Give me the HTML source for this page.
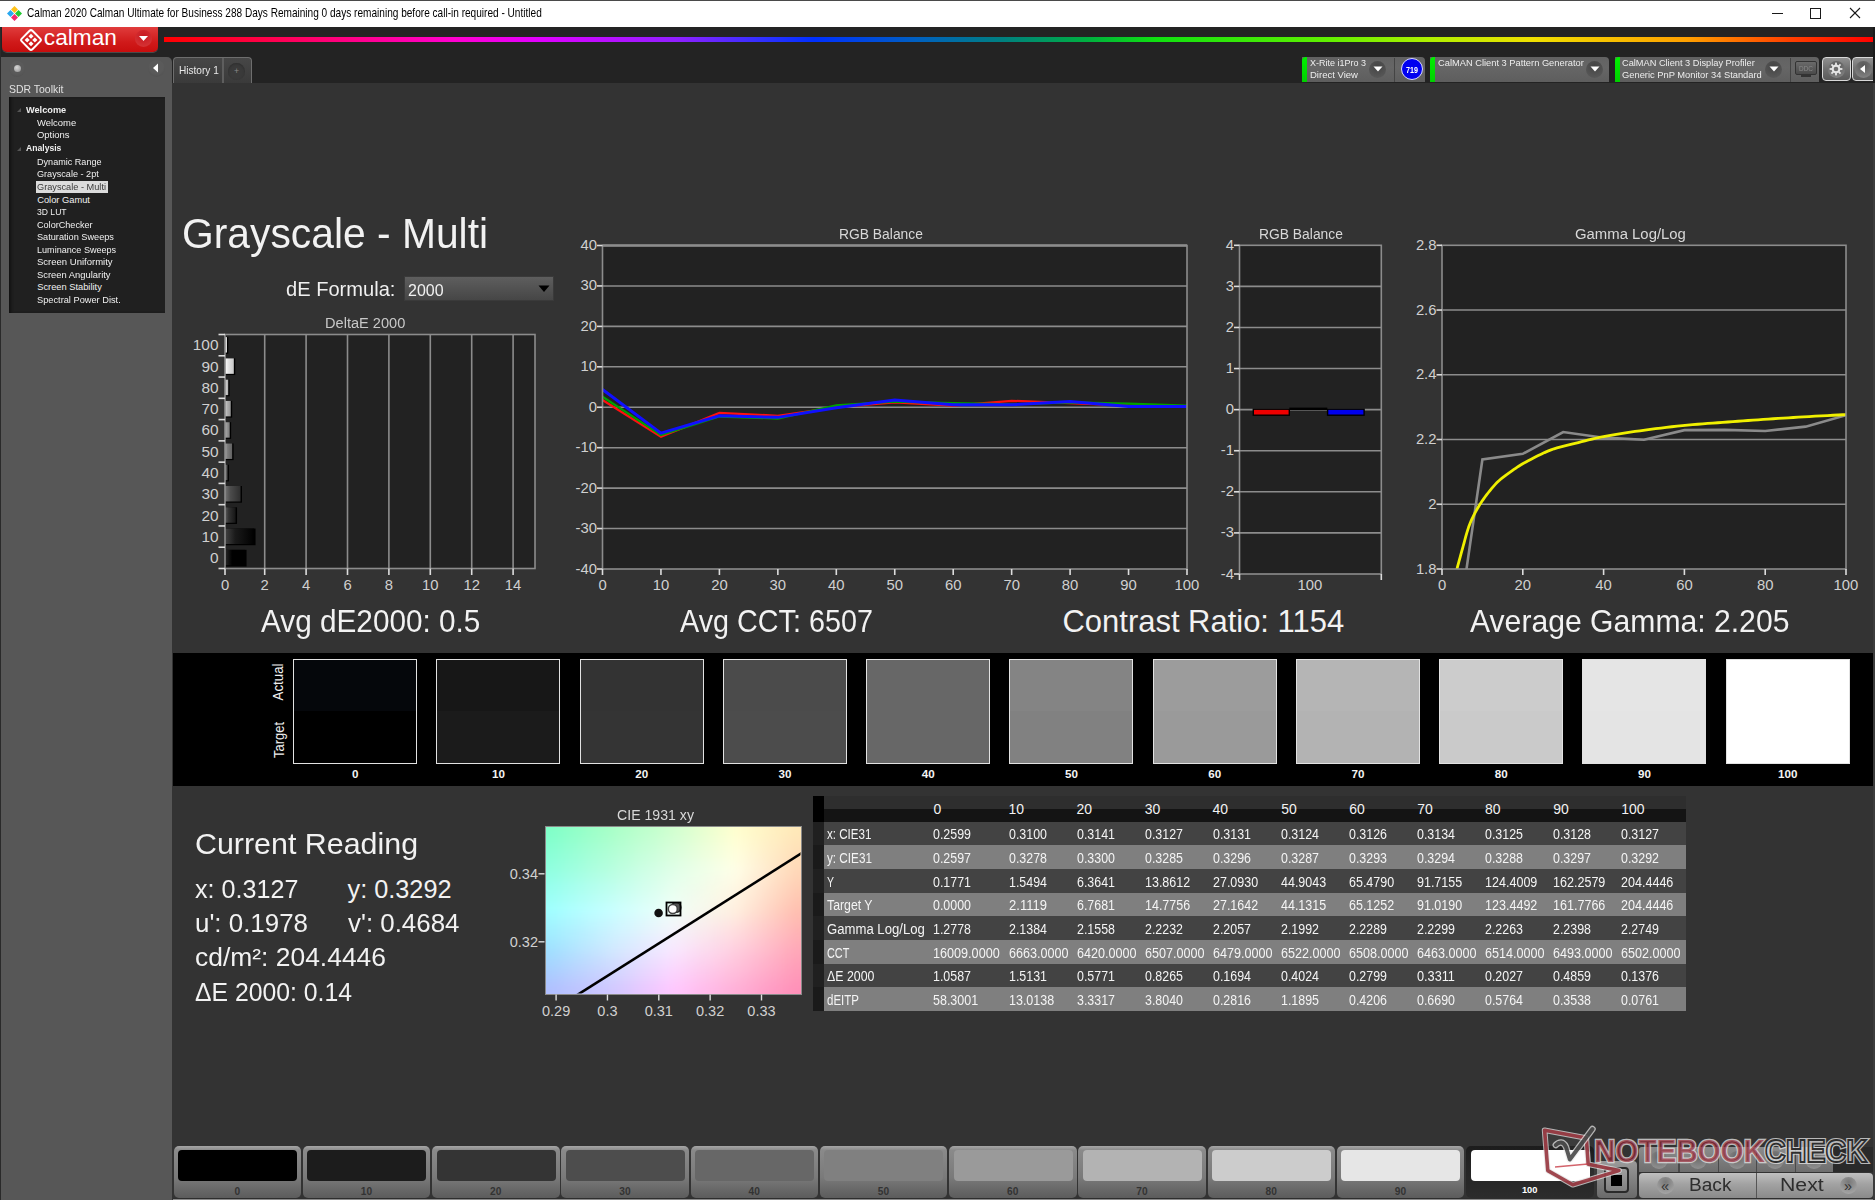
<!DOCTYPE html><html><head><meta charset="utf-8"><style>
*{margin:0;padding:0;box-sizing:border-box}
html,body{width:1875px;height:1200px;overflow:hidden;background:#333333;font-family:"Liberation Sans",sans-serif}
.a{position:absolute}
.t{position:absolute;white-space:nowrap;line-height:1;transform-origin:0 0}
</style></head><body>
<div class="a" style="left:0px;top:0px;width:1875px;height:27px;background:#ffffff;"></div>
<div class="a" style="left:0px;top:0px;width:1875px;height:1px;background:#4a4a4a;"></div>
<svg class="a" style="left:6px;top:5px" width="17" height="17" viewBox="0 0 17 17">
<polygon points="8.5,1 12,4.5 8.5,8 5,4.5" fill="#ffc21a"/>
<polygon points="12.5,5 16,8.5 12.5,12 9,8.5" fill="#22c832"/>
<polygon points="8.5,9 12,12.5 8.5,16 5,12.5" fill="#f0286e"/>
<polygon points="4.5,5 8,8.5 4.5,12 1,8.5" fill="#2aa8f0"/>
</svg>
<div class="t" style="left:26.50px;top:7.19px;font-size:12.06px;color:#000000;transform:scaleX(0.8365);">Calman 2020 Calman Ultimate for Business 288 Days Remaining 0 days remaining before call-in required - Untitled</div>
<svg class="a" style="left:1760px;top:0px" width="115" height="27" viewBox="0 0 115 27">
<line x1="12" y1="13.5" x2="23" y2="13.5" stroke="#1a1a1a" stroke-width="1"/>
<rect x="50.5" y="8.5" width="10" height="10" fill="none" stroke="#1a1a1a" stroke-width="1"/>
<line x1="90" y1="8" x2="100" y2="18" stroke="#1a1a1a" stroke-width="1.1"/>
<line x1="100" y1="8" x2="90" y2="18" stroke="#1a1a1a" stroke-width="1.1"/>
</svg>
<div class="a" style="left:0px;top:27px;width:1875px;height:56px;background:#232323;"></div>
<div class="a" style="left:2px;top:27px;width:156px;height:25px;background:linear-gradient(#e03c3c,#d01a1a 60%,#c80e0e);border-radius:0 0 5px 5px;box-shadow:0 1px 0 #4a4a4a"></div>
<svg class="a" style="left:19px;top:28px" width="24" height="24" viewBox="0 0 24 24">
<g transform="rotate(45 12 12)" fill="none" stroke="#fff" stroke-width="2">
<rect x="4.5" y="4.5" width="15" height="15" rx="2"/>
</g>
<g transform="rotate(45 12 12)" fill="#fff">
<rect x="7.5" y="7.5" width="3.6" height="3.6"/><rect x="12.9" y="7.5" width="3.6" height="3.6"/>
<rect x="7.5" y="12.9" width="3.6" height="3.6"/><rect x="12.9" y="12.9" width="3.6" height="3.6"/>
</g></svg>
<div class="t" style="left:43.80px;top:25.50px;font-size:22.67px;color:#ffffff;">calman</div>
<div class="a" style="left:135px;top:30px;width:17px;height:17px;border-radius:50%;background:radial-gradient(circle at 50% 35%,#c81820,#d83a3a)"></div>
<svg class="a" style="left:138px;top:35px" width="11" height="7" viewBox="0 0 11 7"><polygon points="1,1 10,1 5.5,6" fill="#fff"/></svg>
<div class="a" style="left:164px;top:37px;width:1711px;height:5px;background:linear-gradient(90deg,#ff0000 0%,#ff0070 9%,#ff00d0 17%,#e000ff 22%,#9020ff 30%,#3030ff 35%,#0030ff 38%,#0060c0 44%,#008080 49%,#00b040 54%,#10e010 58%,#60f000 68%,#b0f000 74%,#f0e000 80%,#ffa000 89%,#ff4000 95%,#ff0000 100%)"></div>
<div class="a" style="left:1px;top:57px;width:171px;height:1143px;background:#575757;border-radius:0 5px 0 0"></div>
<div class="a" style="left:0px;top:27px;width:1px;height:1173px;background:#2a2a2a;"></div>
<div class="a" style="left:9px;top:61px;width:16px;height:16px;border-radius:50%;background:radial-gradient(circle at 50% 40%,#5a5a5a 50%,#4c4c4c 100%)"></div>
<div class="a" style="left:13.5px;top:65px;width:7px;height:7px;border-radius:50%;background:radial-gradient(circle at 40% 35%,#d8d8d8,#8a8a8a)"></div>
<div class="a" style="left:148px;top:60px;width:17px;height:17px;border-radius:50%;background:radial-gradient(circle at 50% 40%,#5a5a5a 50%,#4c4c4c 100%)"></div>
<svg class="a" style="left:151px;top:62px" width="10" height="12" viewBox="0 0 10 12"><polygon points="2,6 7,1.5 7,10.5" fill="#fff"/></svg>
<div class="t" style="left:8.60px;top:84.69px;font-size:10.17px;color:#e0e0e0;transform:scaleX(1.0291);">SDR Toolkit</div>
<div class="a" style="left:9px;top:97px;width:156px;height:216px;background:#202020;box-shadow:inset 3px 0 3px -1px #111"></div>
<div class="a" style="left:36px;top:181px;width:72px;height:12px;background:#dcdcdc;"></div>
<div class="t" style="left:25.80px;top:105.62px;font-size:9.30px;color:#f0f0f0;font-weight:bold;transform:scaleX(0.9889);">Welcome</div>
<div class="t" style="left:37.20px;top:118.72px;font-size:9.30px;color:#f0f0f0;transform:scaleX(1.0154);">Welcome</div>
<div class="t" style="left:37.20px;top:131.12px;font-size:9.30px;color:#f0f0f0;transform:scaleX(1.0173);">Options</div>
<div class="t" style="left:25.80px;top:144.12px;font-size:9.30px;color:#f0f0f0;font-weight:bold;transform:scaleX(0.9248);">Analysis</div>
<div class="t" style="left:37.20px;top:157.92px;font-size:9.30px;color:#f0f0f0;transform:scaleX(0.9760);">Dynamic Range</div>
<div class="t" style="left:37.20px;top:170.32px;font-size:9.30px;color:#f0f0f0;transform:scaleX(0.9799);">Grayscale - 2pt</div>
<div class="t" style="left:37.20px;top:182.92px;font-size:9.30px;color:#3a3a3a;transform:scaleX(0.9890);">Grayscale - Multi</div>
<div class="t" style="left:37.20px;top:195.52px;font-size:9.30px;color:#f0f0f0;">Color Gamut</div>
<div class="t" style="left:37.20px;top:207.92px;font-size:9.30px;color:#f0f0f0;transform:scaleX(0.9237);">3D LUT</div>
<div class="t" style="left:37.20px;top:220.52px;font-size:9.30px;color:#f0f0f0;transform:scaleX(0.9774);">ColorChecker</div>
<div class="t" style="left:37.20px;top:233.32px;font-size:9.30px;color:#f0f0f0;transform:scaleX(0.9860);">Saturation Sweeps</div>
<div class="t" style="left:37.20px;top:245.52px;font-size:9.30px;color:#f0f0f0;transform:scaleX(0.9753);">Luminance Sweeps</div>
<div class="t" style="left:37.20px;top:258.32px;font-size:9.30px;color:#f0f0f0;transform:scaleX(1.0229);">Screen Uniformity</div>
<div class="t" style="left:37.20px;top:271.12px;font-size:9.30px;color:#f0f0f0;transform:scaleX(1.0092);">Screen Angularity</div>
<div class="t" style="left:37.20px;top:283.32px;font-size:9.30px;color:#f0f0f0;">Screen Stability</div>
<div class="t" style="left:37.20px;top:296.12px;font-size:9.30px;color:#f0f0f0;transform:scaleX(0.9943);">Spectral Power Dist.</div>
<svg class="a" style="left:15px;top:106px" width="8" height="50" viewBox="0 0 8 50"><polygon points="6,2 6,6 2,6" fill="#555"/><polygon points="6,41 6,45 2,45" fill="#555"/></svg>
<div class="a" style="left:173px;top:57px;width:79px;height:26px;background:linear-gradient(#474747,#3a3a3a);border:1px solid #6e6e6e;border-bottom:none;border-radius:4px 4px 0 0"></div>
<div class="a" style="left:222px;top:58px;width:2px;height:25px;background:#5e5e5e;"></div>
<div class="t" style="left:178.50px;top:65.29px;font-size:10.76px;color:#e8e8e8;transform:scaleX(0.9380);">History 1</div>
<div class="a" style="left:228px;top:63px;width:17px;height:17px;border-radius:50%;background:#3a3a3a;box-shadow:inset 0 1px 2px #2e2e2e"></div>
<div class="t" style="left:233.95px;top:67.12px;font-size:8.72px;color:#8a8a8a;">+</div>
<div class="a" style="left:173px;top:83px;width:1702px;height:1117px;background:#333333;"></div>
<div class="a" style="left:1873px;top:83px;width:2px;height:1117px;background:#3c3c3c;"></div>
<div class="a" style="left:1302px;top:57px;width:123px;height:25px;background:linear-gradient(#626262,#666666 40%,#5e5e5e);border-radius:0 4px 0 0"></div>
<div class="a" style="left:1302px;top:57px;width:5px;height:25px;background:linear-gradient(#00f000,#00d000);border-radius:4px 0 0 0"></div>
<div class="t" style="left:1310.00px;top:58.48px;font-size:9.59px;color:#eeeeee;transform:scaleX(0.9378);">X-Rite i1Pro 3</div>
<div class="t" style="left:1310.00px;top:70.48px;font-size:9.59px;color:#eeeeee;transform:scaleX(0.9928);">Direct View</div>
<div class="a" style="left:1369.0px;top:61px;width:17px;height:17px;border-radius:50%;background:radial-gradient(circle at 50% 30%,#444,#5c5c5c)"></div>
<svg class="a" style="left:1372.5px;top:66px" width="10" height="7" viewBox="0 0 10 7"><polygon points="0.5,0.5 9.5,0.5 5,5.5" fill="#fff"/></svg>
<div class="a" style="left:1394px;top:58px;width:1px;height:24px;background:#444444;"></div>
<div class="a" style="left:1401px;top:58px;width:22px;height:22px;border-radius:50%;background:#0000f0;border:1px solid #d8d8ff"></div>
<div class="t" style="left:1406.00px;top:65.67px;font-size:9.01px;color:#ffffff;font-weight:bold;transform:scaleX(0.7974);">719</div>
<div class="a" style="left:1430px;top:57px;width:179px;height:25px;background:linear-gradient(#626262,#666666 40%,#5e5e5e);border-radius:0 4px 0 0"></div>
<div class="a" style="left:1430px;top:57px;width:5px;height:25px;background:linear-gradient(#00f000,#00d000);border-radius:4px 0 0 0"></div>
<div class="t" style="left:1438.00px;top:58.48px;font-size:9.59px;color:#eeeeee;transform:scaleX(0.9709);">CalMAN Client 3 Pattern Generator</div>
<div class="a" style="left:1586.0px;top:61px;width:17px;height:17px;border-radius:50%;background:radial-gradient(circle at 50% 30%,#444,#5c5c5c)"></div>
<svg class="a" style="left:1589.5px;top:66px" width="10" height="7" viewBox="0 0 10 7"><polygon points="0.5,0.5 9.5,0.5 5,5.5" fill="#fff"/></svg>
<div class="a" style="left:1615px;top:57px;width:204px;height:25px;background:linear-gradient(#626262,#666666 40%,#5e5e5e);border-radius:0 4px 0 0"></div>
<div class="a" style="left:1615px;top:57px;width:5px;height:25px;background:linear-gradient(#00f000,#00d000);border-radius:4px 0 0 0"></div>
<div class="t" style="left:1622.00px;top:58.48px;font-size:9.59px;color:#eeeeee;transform:scaleX(0.9631);">CalMAN Client 3 Display Profiler</div>
<div class="t" style="left:1622.00px;top:70.48px;font-size:9.59px;color:#eeeeee;transform:scaleX(0.9736);">Generic PnP Monitor 34 Standard</div>
<div class="a" style="left:1765.0px;top:61px;width:17px;height:17px;border-radius:50%;background:radial-gradient(circle at 50% 30%,#444,#5c5c5c)"></div>
<svg class="a" style="left:1768.5px;top:66px" width="10" height="7" viewBox="0 0 10 7"><polygon points="0.5,0.5 9.5,0.5 5,5.5" fill="#fff"/></svg>
<div class="a" style="left:1790px;top:58px;width:1px;height:24px;background:#444444;"></div>
<div class="a" style="left:1795px;top:61px;width:22px;height:14px;background:linear-gradient(#6a6a6a,#4a4a4a);border:1px solid #333;border-radius:2px"></div>
<div class="a" style="left:1801px;top:75px;width:10px;height:2px;background:#333;"></div>
<div class="t" style="left:1799.00px;top:64.73px;font-size:7.99px;color:#8a8a8a;transform:scaleX(0.8089);">DDC</div>
<div class="a" style="left:1822px;top:57px;width:28.5px;height:24px;background:linear-gradient(#909090,#707070 50%,#5a5a5a);border:1.5px solid #d8d8d8;border-radius:4px"></div>
<div class="a" style="left:1827.5px;top:60.5px;width:17px;height:17px;border-radius:50%;background:radial-gradient(circle at 50% 25%,#585858,#8a8a8a)"></div>
<svg class="a" style="left:1827px;top:60px" width="18" height="18" viewBox="0 0 18 18"><g fill="#e6e6e6"><rect x="8.1" y="2.6" width="1.8" height="3" transform="rotate(0 9 9)"/><rect x="8.1" y="2.6" width="1.8" height="3" transform="rotate(45 9 9)"/><rect x="8.1" y="2.6" width="1.8" height="3" transform="rotate(90 9 9)"/><rect x="8.1" y="2.6" width="1.8" height="3" transform="rotate(135 9 9)"/><rect x="8.1" y="2.6" width="1.8" height="3" transform="rotate(180 9 9)"/><rect x="8.1" y="2.6" width="1.8" height="3" transform="rotate(225 9 9)"/><rect x="8.1" y="2.6" width="1.8" height="3" transform="rotate(270 9 9)"/><rect x="8.1" y="2.6" width="1.8" height="3" transform="rotate(315 9 9)"/><circle cx="9" cy="9" r="4.4"/></g><circle cx="9" cy="9" r="2.3" fill="#6e6e6e"/></svg>
<div class="a" style="left:1851.5px;top:57px;width:26px;height:24px;background:linear-gradient(#909090,#707070 50%,#5a5a5a);border:1.5px solid #d8d8d8;border-radius:4px"></div>
<div class="a" style="left:1854.5px;top:60.5px;width:17px;height:17px;border-radius:50%;background:radial-gradient(circle at 50% 25%,#585858,#8a8a8a)"></div>
<svg class="a" style="left:1858px;top:62.5px" width="10" height="12" viewBox="0 0 10 12"><polygon points="2,6 7,2 7,10" fill="#fff"/></svg>
<div class="a" style="left:1873px;top:27px;width:2px;height:56px;background:#1a1a1a;"></div>
<div class="t" style="left:182.00px;top:213.26px;font-size:41.86px;color:#f2f2f2;transform:scaleX(0.9747);">Grayscale - Multi</div>
<div class="t" style="left:285.50px;top:280.29px;font-size:19.62px;color:#f0f0f0;transform:scaleX(1.0249);">dE Formula:</div>
<div class="a" style="left:404px;top:276px;width:150px;height:25px;background:linear-gradient(#5e5e5e,#464646);border:1px solid #3a3a3a"></div>
<div class="t" style="left:408.40px;top:282.38px;font-size:17.15px;color:#f0f0f0;transform:scaleX(0.9329);">2000</div>
<svg class="a" style="left:538px;top:285px" width="12" height="8" viewBox="0 0 12 8"><polygon points="0.5,0.5 11.5,0.5 6,7" fill="#000"/></svg>
<div class="t" style="left:324.60px;top:317.19px;font-size:13.95px;color:#c8c8c8;transform:scaleX(1.0467);">DeltaE 2000</div>
<svg class="a" style="left:170px;top:320px" width="380" height="270" viewBox="170 320 380 270">
<rect x="225.0" y="334.5" width="310.0" height="234.0" fill="#222222"/>
<line x1="264.7" y1="334.5" x2="264.7" y2="568.5" stroke="#8c8c8c" stroke-width="1.6"/>
<line x1="306.09999999999997" y1="334.5" x2="306.09999999999997" y2="568.5" stroke="#8c8c8c" stroke-width="1.6"/>
<line x1="347.5" y1="334.5" x2="347.5" y2="568.5" stroke="#8c8c8c" stroke-width="1.6"/>
<line x1="388.9" y1="334.5" x2="388.9" y2="568.5" stroke="#8c8c8c" stroke-width="1.6"/>
<line x1="430.29999999999995" y1="334.5" x2="430.29999999999995" y2="568.5" stroke="#8c8c8c" stroke-width="1.6"/>
<line x1="471.7" y1="334.5" x2="471.7" y2="568.5" stroke="#8c8c8c" stroke-width="1.6"/>
<line x1="513.0999999999999" y1="334.5" x2="513.0999999999999" y2="568.5" stroke="#8c8c8c" stroke-width="1.6"/>
<defs><linearGradient id="bg100" x1="0" x2="1" y1="0" y2="0"><stop offset="0" stop-color="rgb(255,255,255)"/><stop offset="0.35" stop-color="rgb(255,255,255)"/><stop offset="1" stop-color="rgb(225,225,225)"/></linearGradient></defs>
<rect x="225.0" y="337.10" width="3.32" height="16.67" fill="#000"/>
<rect x="225.0" y="337.10" width="1.92" height="15.47" fill="url(#bg100)"/>
<defs><linearGradient id="bg90" x1="0" x2="1" y1="0" y2="0"><stop offset="0" stop-color="rgb(255,255,255)"/><stop offset="0.35" stop-color="rgb(229,229,229)"/><stop offset="1" stop-color="rgb(199,199,199)"/></linearGradient></defs>
<rect x="225.0" y="358.37" width="10.22" height="16.67" fill="#000"/>
<rect x="225.0" y="358.37" width="8.82" height="15.47" fill="url(#bg90)"/>
<defs><linearGradient id="bg80" x1="0" x2="1" y1="0" y2="0"><stop offset="0" stop-color="rgb(244,244,244)"/><stop offset="0.35" stop-color="rgb(204,204,204)"/><stop offset="1" stop-color="rgb(174,174,174)"/></linearGradient></defs>
<rect x="225.0" y="379.65" width="4.61" height="16.67" fill="#000"/>
<rect x="225.0" y="379.65" width="3.21" height="15.47" fill="url(#bg80)"/>
<defs><linearGradient id="bg70" x1="0" x2="1" y1="0" y2="0"><stop offset="0" stop-color="rgb(218,218,218)"/><stop offset="0.35" stop-color="rgb(178,178,178)"/><stop offset="1" stop-color="rgb(148,148,148)"/></linearGradient></defs>
<rect x="225.0" y="400.92" width="7.16" height="16.67" fill="#000"/>
<rect x="225.0" y="400.92" width="5.76" height="15.47" fill="url(#bg70)"/>
<defs><linearGradient id="bg60" x1="0" x2="1" y1="0" y2="0"><stop offset="0" stop-color="rgb(193,193,193)"/><stop offset="0.35" stop-color="rgb(153,153,153)"/><stop offset="1" stop-color="rgb(123,123,123)"/></linearGradient></defs>
<rect x="225.0" y="422.19" width="6.14" height="16.67" fill="#000"/>
<rect x="225.0" y="422.19" width="4.74" height="15.47" fill="url(#bg60)"/>
<defs><linearGradient id="bg50" x1="0" x2="1" y1="0" y2="0"><stop offset="0" stop-color="rgb(167,167,167)"/><stop offset="0.35" stop-color="rgb(127,127,127)"/><stop offset="1" stop-color="rgb(97,97,97)"/></linearGradient></defs>
<rect x="225.0" y="443.46" width="8.57" height="16.67" fill="#000"/>
<rect x="225.0" y="443.46" width="7.17" height="15.47" fill="url(#bg50)"/>
<defs><linearGradient id="bg40" x1="0" x2="1" y1="0" y2="0"><stop offset="0" stop-color="rgb(142,142,142)"/><stop offset="0.35" stop-color="rgb(102,102,102)"/><stop offset="1" stop-color="rgb(72,72,72)"/></linearGradient></defs>
<rect x="225.0" y="464.74" width="3.95" height="16.67" fill="#000"/>
<rect x="225.0" y="464.74" width="2.55" height="15.47" fill="url(#bg40)"/>
<defs><linearGradient id="bg30" x1="0" x2="1" y1="0" y2="0"><stop offset="0" stop-color="rgb(116,116,116)"/><stop offset="0.35" stop-color="rgb(76,76,76)"/><stop offset="1" stop-color="rgb(46,46,46)"/></linearGradient></defs>
<rect x="225.0" y="486.01" width="16.96" height="16.67" fill="#000"/>
<rect x="225.0" y="486.01" width="15.56" height="15.47" fill="url(#bg30)"/>
<defs><linearGradient id="bg20" x1="0" x2="1" y1="0" y2="0"><stop offset="0" stop-color="rgb(91,91,91)"/><stop offset="0.35" stop-color="rgb(51,51,51)"/><stop offset="1" stop-color="rgb(21,21,21)"/></linearGradient></defs>
<rect x="225.0" y="507.28" width="12.03" height="16.67" fill="#000"/>
<rect x="225.0" y="507.28" width="10.63" height="15.47" fill="url(#bg20)"/>
<defs><linearGradient id="bg10" x1="0" x2="1" y1="0" y2="0"><stop offset="0" stop-color="rgb(66,66,66)"/><stop offset="0.35" stop-color="rgb(26,26,26)"/><stop offset="1" stop-color="rgb(0,0,0)"/></linearGradient></defs>
<rect x="225.0" y="528.55" width="30.56" height="16.67" fill="#000"/>
<rect x="225.0" y="528.55" width="29.16" height="15.47" fill="url(#bg10)"/>
<defs><linearGradient id="bg0" x1="0" x2="1" y1="0" y2="0"><stop offset="0" stop-color="rgb(40,40,40)"/><stop offset="0.35" stop-color="rgb(0,0,0)"/><stop offset="1" stop-color="rgb(0,0,0)"/></linearGradient></defs>
<rect x="225.0" y="549.83" width="21.56" height="16.67" fill="#000"/>
<rect x="225.0" y="549.83" width="20.16" height="15.47" fill="url(#bg0)"/>
<rect x="225.0" y="334.5" width="310.0" height="234.0" fill="none" stroke="#8c8c8c" stroke-width="1.6"/>
<line x1="218.5" y1="334.50" x2="225.0" y2="334.50" stroke="#dcdcdc" stroke-width="1.6"/>
<line x1="218.5" y1="355.77" x2="225.0" y2="355.77" stroke="#dcdcdc" stroke-width="1.6"/>
<line x1="218.5" y1="377.05" x2="225.0" y2="377.05" stroke="#dcdcdc" stroke-width="1.6"/>
<line x1="218.5" y1="398.32" x2="225.0" y2="398.32" stroke="#dcdcdc" stroke-width="1.6"/>
<line x1="218.5" y1="419.59" x2="225.0" y2="419.59" stroke="#dcdcdc" stroke-width="1.6"/>
<line x1="218.5" y1="440.86" x2="225.0" y2="440.86" stroke="#dcdcdc" stroke-width="1.6"/>
<line x1="218.5" y1="462.14" x2="225.0" y2="462.14" stroke="#dcdcdc" stroke-width="1.6"/>
<line x1="218.5" y1="483.41" x2="225.0" y2="483.41" stroke="#dcdcdc" stroke-width="1.6"/>
<line x1="218.5" y1="504.68" x2="225.0" y2="504.68" stroke="#dcdcdc" stroke-width="1.6"/>
<line x1="218.5" y1="525.95" x2="225.0" y2="525.95" stroke="#dcdcdc" stroke-width="1.6"/>
<line x1="218.5" y1="547.23" x2="225.0" y2="547.23" stroke="#dcdcdc" stroke-width="1.6"/>
<line x1="218.5" y1="568.50" x2="225.0" y2="568.50" stroke="#dcdcdc" stroke-width="1.6"/>
<line x1="225.0" y1="568.5" x2="225.0" y2="575" stroke="#dcdcdc" stroke-width="1.6"/>
<line x1="264.7" y1="568.5" x2="264.7" y2="575" stroke="#dcdcdc" stroke-width="1.6"/>
<line x1="306.09999999999997" y1="568.5" x2="306.09999999999997" y2="575" stroke="#dcdcdc" stroke-width="1.6"/>
<line x1="347.5" y1="568.5" x2="347.5" y2="575" stroke="#dcdcdc" stroke-width="1.6"/>
<line x1="388.9" y1="568.5" x2="388.9" y2="575" stroke="#dcdcdc" stroke-width="1.6"/>
<line x1="430.29999999999995" y1="568.5" x2="430.29999999999995" y2="575" stroke="#dcdcdc" stroke-width="1.6"/>
<line x1="471.7" y1="568.5" x2="471.7" y2="575" stroke="#dcdcdc" stroke-width="1.6"/>
<line x1="513.0999999999999" y1="568.5" x2="513.0999999999999" y2="575" stroke="#dcdcdc" stroke-width="1.6"/>
</svg>
<div class="t" style="left:192.77px;top:337.39px;font-size:15.41px;color:#d0d0d0;">100</div>
<div class="t" style="left:201.40px;top:358.66px;font-size:15.41px;color:#d0d0d0;">90</div>
<div class="t" style="left:201.40px;top:379.94px;font-size:15.41px;color:#d0d0d0;">80</div>
<div class="t" style="left:201.40px;top:401.21px;font-size:15.41px;color:#d0d0d0;">70</div>
<div class="t" style="left:201.40px;top:422.48px;font-size:15.41px;color:#d0d0d0;">60</div>
<div class="t" style="left:201.40px;top:443.75px;font-size:15.41px;color:#d0d0d0;">50</div>
<div class="t" style="left:201.40px;top:465.03px;font-size:15.41px;color:#d0d0d0;">40</div>
<div class="t" style="left:201.40px;top:486.30px;font-size:15.41px;color:#d0d0d0;">30</div>
<div class="t" style="left:201.40px;top:507.57px;font-size:15.41px;color:#d0d0d0;">20</div>
<div class="t" style="left:201.40px;top:528.85px;font-size:15.41px;color:#d0d0d0;">10</div>
<div class="t" style="left:209.95px;top:550.12px;font-size:15.41px;color:#d0d0d0;">0</div>
<div class="t" style="left:220.89px;top:577.85px;font-size:14.83px;color:#d0d0d0;">0</div>
<div class="t" style="left:260.59px;top:577.85px;font-size:14.83px;color:#d0d0d0;">2</div>
<div class="t" style="left:301.99px;top:577.85px;font-size:14.83px;color:#d0d0d0;">4</div>
<div class="t" style="left:343.39px;top:577.85px;font-size:14.83px;color:#d0d0d0;">6</div>
<div class="t" style="left:384.79px;top:577.85px;font-size:14.83px;color:#d0d0d0;">8</div>
<div class="t" style="left:422.07px;top:577.85px;font-size:14.83px;color:#d0d0d0;">10</div>
<div class="t" style="left:463.47px;top:577.85px;font-size:14.83px;color:#d0d0d0;">12</div>
<div class="t" style="left:504.87px;top:577.85px;font-size:14.83px;color:#d0d0d0;">14</div>
<div class="t" style="left:839.00px;top:226.74px;font-size:14.24px;color:#d8d8d8;transform:scaleX(0.9731);">RGB Balance</div>
<svg class="a" style="left:590px;top:235px" width="610" height="350" viewBox="590 235 610 350">
<rect x="602.5" y="245.5" width="584.5" height="323.5" fill="#222222"/>
<line x1="602.5" y1="285.94" x2="1187.0" y2="285.94" stroke="#8c8c8c" stroke-width="1.6"/>
<line x1="602.5" y1="326.38" x2="1187.0" y2="326.38" stroke="#8c8c8c" stroke-width="1.6"/>
<line x1="602.5" y1="366.81" x2="1187.0" y2="366.81" stroke="#8c8c8c" stroke-width="1.6"/>
<line x1="602.5" y1="407.25" x2="1187.0" y2="407.25" stroke="#8c8c8c" stroke-width="1.6"/>
<line x1="602.5" y1="447.69" x2="1187.0" y2="447.69" stroke="#8c8c8c" stroke-width="1.6"/>
<line x1="602.5" y1="488.12" x2="1187.0" y2="488.12" stroke="#8c8c8c" stroke-width="1.6"/>
<line x1="602.5" y1="528.56" x2="1187.0" y2="528.56" stroke="#8c8c8c" stroke-width="1.6"/>
<polyline points="602.50,399.97 660.95,436.77 719.40,412.91 777.85,415.74 836.30,407.25 894.75,402.40 953.20,405.63 1011.65,400.78 1070.10,403.21 1128.55,405.63 1187.00,406.44" fill="none" stroke="#ff1010" stroke-width="2.2"/>
<polyline points="602.50,396.74 660.95,435.15 719.40,416.55 777.85,418.57 836.30,405.23 894.75,401.59 953.20,403.21 1011.65,404.42 1070.10,402.40 1128.55,403.61 1187.00,405.63" fill="none" stroke="#00a000" stroke-width="2.2"/>
<polyline points="602.50,389.46 660.95,433.13 719.40,415.74 777.85,417.36 836.30,407.65 894.75,399.97 953.20,404.82 1011.65,404.82 1070.10,401.59 1128.55,406.44 1187.00,406.44" fill="none" stroke="#1010ff" stroke-width="3"/>
<rect x="602.5" y="245.5" width="584.5" height="323.5" fill="none" stroke="#8c8c8c" stroke-width="1.6"/>
<line x1="602.5" y1="245.5" x2="1187.0" y2="245.5" stroke="#8c8c8c" stroke-width="2.4"/>
<line x1="597" y1="245.50" x2="602.5" y2="245.50" stroke="#dcdcdc" stroke-width="1.6"/>
<line x1="597" y1="285.94" x2="602.5" y2="285.94" stroke="#dcdcdc" stroke-width="1.6"/>
<line x1="597" y1="326.38" x2="602.5" y2="326.38" stroke="#dcdcdc" stroke-width="1.6"/>
<line x1="597" y1="366.81" x2="602.5" y2="366.81" stroke="#dcdcdc" stroke-width="1.6"/>
<line x1="597" y1="407.25" x2="602.5" y2="407.25" stroke="#dcdcdc" stroke-width="1.6"/>
<line x1="597" y1="447.69" x2="602.5" y2="447.69" stroke="#dcdcdc" stroke-width="1.6"/>
<line x1="597" y1="488.12" x2="602.5" y2="488.12" stroke="#dcdcdc" stroke-width="1.6"/>
<line x1="597" y1="528.56" x2="602.5" y2="528.56" stroke="#dcdcdc" stroke-width="1.6"/>
<line x1="597" y1="569.00" x2="602.5" y2="569.00" stroke="#dcdcdc" stroke-width="1.6"/>
<line x1="602.50" y1="569.0" x2="602.50" y2="575" stroke="#dcdcdc" stroke-width="1.6"/>
<line x1="660.95" y1="569.0" x2="660.95" y2="575" stroke="#dcdcdc" stroke-width="1.6"/>
<line x1="719.40" y1="569.0" x2="719.40" y2="575" stroke="#dcdcdc" stroke-width="1.6"/>
<line x1="777.85" y1="569.0" x2="777.85" y2="575" stroke="#dcdcdc" stroke-width="1.6"/>
<line x1="836.30" y1="569.0" x2="836.30" y2="575" stroke="#dcdcdc" stroke-width="1.6"/>
<line x1="894.75" y1="569.0" x2="894.75" y2="575" stroke="#dcdcdc" stroke-width="1.6"/>
<line x1="953.20" y1="569.0" x2="953.20" y2="575" stroke="#dcdcdc" stroke-width="1.6"/>
<line x1="1011.65" y1="569.0" x2="1011.65" y2="575" stroke="#dcdcdc" stroke-width="1.6"/>
<line x1="1070.10" y1="569.0" x2="1070.10" y2="575" stroke="#dcdcdc" stroke-width="1.6"/>
<line x1="1128.55" y1="569.0" x2="1128.55" y2="575" stroke="#dcdcdc" stroke-width="1.6"/>
<line x1="1187.00" y1="569.0" x2="1187.00" y2="575" stroke="#dcdcdc" stroke-width="1.6"/>
</svg>
<div class="t" style="left:580.54px;top:238.05px;font-size:14.83px;color:#d0d0d0;">40</div>
<div class="t" style="left:580.54px;top:278.48px;font-size:14.83px;color:#d0d0d0;">30</div>
<div class="t" style="left:580.54px;top:318.92px;font-size:14.83px;color:#d0d0d0;">20</div>
<div class="t" style="left:580.54px;top:359.36px;font-size:14.83px;color:#d0d0d0;">10</div>
<div class="t" style="left:588.77px;top:399.80px;font-size:14.83px;color:#d0d0d0;">0</div>
<div class="t" style="left:575.58px;top:440.23px;font-size:14.83px;color:#d0d0d0;">-10</div>
<div class="t" style="left:575.58px;top:480.67px;font-size:14.83px;color:#d0d0d0;">-20</div>
<div class="t" style="left:575.58px;top:521.11px;font-size:14.83px;color:#d0d0d0;">-30</div>
<div class="t" style="left:575.58px;top:561.55px;font-size:14.83px;color:#d0d0d0;">-40</div>
<div class="t" style="left:598.39px;top:577.85px;font-size:14.83px;color:#d0d0d0;">0</div>
<div class="t" style="left:652.72px;top:577.85px;font-size:14.83px;color:#d0d0d0;">10</div>
<div class="t" style="left:711.17px;top:577.85px;font-size:14.83px;color:#d0d0d0;">20</div>
<div class="t" style="left:769.62px;top:577.85px;font-size:14.83px;color:#d0d0d0;">30</div>
<div class="t" style="left:828.07px;top:577.85px;font-size:14.83px;color:#d0d0d0;">40</div>
<div class="t" style="left:886.52px;top:577.85px;font-size:14.83px;color:#d0d0d0;">50</div>
<div class="t" style="left:944.97px;top:577.85px;font-size:14.83px;color:#d0d0d0;">60</div>
<div class="t" style="left:1003.42px;top:577.85px;font-size:14.83px;color:#d0d0d0;">70</div>
<div class="t" style="left:1061.87px;top:577.85px;font-size:14.83px;color:#d0d0d0;">80</div>
<div class="t" style="left:1120.32px;top:577.85px;font-size:14.83px;color:#d0d0d0;">90</div>
<div class="t" style="left:1174.62px;top:577.85px;font-size:14.83px;color:#d0d0d0;">100</div>
<div class="t" style="left:1258.50px;top:226.74px;font-size:14.24px;color:#d8d8d8;transform:scaleX(0.9731);">RGB Balance</div>
<svg class="a" style="left:1225px;top:235px" width="170" height="355" viewBox="1225 235 170 355">
<rect x="1239.5" y="245.3" width="141.79999999999995" height="328.7" fill="#222222"/>
<line x1="1239.5" y1="286.39" x2="1381.3" y2="286.39" stroke="#8c8c8c" stroke-width="1.6"/>
<line x1="1239.5" y1="327.48" x2="1381.3" y2="327.48" stroke="#8c8c8c" stroke-width="1.6"/>
<line x1="1239.5" y1="368.56" x2="1381.3" y2="368.56" stroke="#8c8c8c" stroke-width="1.6"/>
<line x1="1239.5" y1="409.65" x2="1381.3" y2="409.65" stroke="#8c8c8c" stroke-width="1.6"/>
<line x1="1239.5" y1="450.74" x2="1381.3" y2="450.74" stroke="#8c8c8c" stroke-width="1.6"/>
<line x1="1239.5" y1="491.82" x2="1381.3" y2="491.82" stroke="#8c8c8c" stroke-width="1.6"/>
<line x1="1239.5" y1="532.91" x2="1381.3" y2="532.91" stroke="#8c8c8c" stroke-width="1.6"/>
<rect x="1253.3" y="409.2" width="36" height="6" fill="#ee0000" stroke="#000" stroke-width="1.4"/>
<rect x="1289.3" y="407.6" width="38" height="2.4" fill="#000"/>
<rect x="1327.6" y="409.2" width="36.5" height="6" fill="#0000ee" stroke="#000" stroke-width="1.4"/>
<rect x="1239.5" y="245.3" width="141.79999999999995" height="328.7" fill="none" stroke="#8c8c8c" stroke-width="1.6"/>
<line x1="1234" y1="245.30" x2="1239.5" y2="245.30" stroke="#dcdcdc" stroke-width="1.6"/>
<line x1="1234" y1="286.39" x2="1239.5" y2="286.39" stroke="#dcdcdc" stroke-width="1.6"/>
<line x1="1234" y1="327.48" x2="1239.5" y2="327.48" stroke="#dcdcdc" stroke-width="1.6"/>
<line x1="1234" y1="368.56" x2="1239.5" y2="368.56" stroke="#dcdcdc" stroke-width="1.6"/>
<line x1="1234" y1="409.65" x2="1239.5" y2="409.65" stroke="#dcdcdc" stroke-width="1.6"/>
<line x1="1234" y1="450.74" x2="1239.5" y2="450.74" stroke="#dcdcdc" stroke-width="1.6"/>
<line x1="1234" y1="491.82" x2="1239.5" y2="491.82" stroke="#dcdcdc" stroke-width="1.6"/>
<line x1="1234" y1="532.91" x2="1239.5" y2="532.91" stroke="#dcdcdc" stroke-width="1.6"/>
<line x1="1234" y1="574.00" x2="1239.5" y2="574.00" stroke="#dcdcdc" stroke-width="1.6"/>
<line x1="1239.5" y1="574.0" x2="1239.5" y2="580" stroke="#dcdcdc" stroke-width="1.6"/>
<line x1="1381.3" y1="574.0" x2="1381.3" y2="580" stroke="#dcdcdc" stroke-width="1.6"/>
</svg>
<div class="t" style="left:1225.77px;top:237.85px;font-size:14.83px;color:#d0d0d0;">4</div>
<div class="t" style="left:1225.77px;top:278.93px;font-size:14.83px;color:#d0d0d0;">3</div>
<div class="t" style="left:1225.77px;top:320.02px;font-size:14.83px;color:#d0d0d0;">2</div>
<div class="t" style="left:1225.77px;top:361.11px;font-size:14.83px;color:#d0d0d0;">1</div>
<div class="t" style="left:1225.77px;top:402.20px;font-size:14.83px;color:#d0d0d0;">0</div>
<div class="t" style="left:1220.81px;top:443.28px;font-size:14.83px;color:#d0d0d0;">-1</div>
<div class="t" style="left:1220.81px;top:484.37px;font-size:14.83px;color:#d0d0d0;">-2</div>
<div class="t" style="left:1220.81px;top:525.46px;font-size:14.83px;color:#d0d0d0;">-3</div>
<div class="t" style="left:1220.81px;top:566.55px;font-size:14.83px;color:#d0d0d0;">-4</div>
<div class="t" style="left:1297.62px;top:577.85px;font-size:14.83px;color:#d0d0d0;">100</div>
<div class="t" style="left:1574.50px;top:226.74px;font-size:14.24px;color:#d8d8d8;transform:scaleX(1.0460);">Gamma Log/Log</div>
<svg class="a" style="left:1400px;top:235px" width="460" height="350" viewBox="1400 235 460 350">
<rect x="1442.0" y="245.3" width="404.0" height="323.7" fill="#222222"/>
<line x1="1442.0" y1="310.04" x2="1846.0" y2="310.04" stroke="#8c8c8c" stroke-width="1.6"/>
<line x1="1442.0" y1="374.78" x2="1846.0" y2="374.78" stroke="#8c8c8c" stroke-width="1.6"/>
<line x1="1442.0" y1="439.52" x2="1846.0" y2="439.52" stroke="#8c8c8c" stroke-width="1.6"/>
<line x1="1442.0" y1="504.26" x2="1846.0" y2="504.26" stroke="#8c8c8c" stroke-width="1.6"/>
<clipPath id="gclip"><rect x="1442.0" y="245.3" width="404.0" height="323.7"/></clipPath>
<polyline clip-path="url(#gclip)" points="1442.00,738.04 1482.40,459.46 1522.80,453.83 1563.20,432.01 1603.60,437.67 1644.00,439.78 1684.40,430.17 1724.80,429.84 1765.20,431.01 1805.60,426.64 1846.00,415.27" fill="none" stroke="#8a8a8a" stroke-width="2.6"/>
<polyline clip-path="url(#gclip)" points="1452.50,585.18 1452.86,583.88 1453.33,582.16 1453.89,580.11 1454.52,577.82 1455.18,575.38 1455.87,572.88 1456.54,570.40 1457.19,568.03 1457.82,565.72 1458.45,563.37 1459.10,560.98 1459.75,558.56 1460.42,556.11 1461.09,553.63 1461.78,551.13 1462.48,548.61 1463.20,546.00 1463.94,543.29 1464.69,540.51 1465.45,537.72 1466.22,534.98 1466.98,532.34 1467.75,529.85 1468.50,527.57 1469.23,525.52 1469.93,523.67 1470.61,521.98 1471.31,520.38 1472.02,518.84 1472.77,517.29 1473.59,515.68 1474.48,513.97 1475.43,512.18 1476.42,510.38 1477.44,508.55 1478.52,506.71 1479.65,504.84 1480.85,502.95 1482.13,501.03 1483.49,499.08 1484.96,497.05 1486.55,494.93 1488.22,492.75 1489.95,490.56 1491.72,488.41 1493.50,486.33 1495.27,484.37 1496.98,482.57 1498.66,480.95 1500.33,479.47 1501.99,478.10 1503.66,476.81 1505.33,475.57 1507.03,474.36 1508.76,473.14 1510.52,471.89 1512.25,470.65 1513.92,469.45 1515.57,468.29 1517.27,467.14 1519.05,465.97 1520.99,464.77 1523.12,463.51 1525.51,462.18 1528.20,460.73 1531.18,459.15 1534.36,457.50 1537.69,455.83 1541.09,454.18 1544.49,452.60 1547.81,451.15 1551.00,449.88 1554.04,448.79 1557.00,447.86 1559.91,447.04 1562.81,446.30 1565.73,445.60 1568.71,444.91 1571.79,444.19 1575.00,443.40 1578.29,442.56 1581.62,441.70 1585.01,440.84 1588.48,439.97 1592.04,439.10 1595.73,438.25 1599.54,437.41 1603.52,436.61 1607.65,435.83 1611.93,435.07 1616.34,434.32 1620.87,433.59 1625.51,432.87 1630.24,432.17 1635.06,431.47 1639.96,430.78 1644.99,430.09 1650.19,429.39 1655.52,428.71 1660.92,428.03 1666.36,427.37 1671.78,426.74 1677.13,426.15 1682.38,425.60 1687.53,425.10 1692.62,424.65 1697.68,424.23 1702.71,423.84 1707.72,423.47 1712.73,423.10 1717.74,422.74 1722.78,422.36 1727.83,421.98 1732.88,421.61 1737.93,421.23 1742.98,420.87 1748.03,420.51 1753.08,420.15 1758.13,419.80 1763.18,419.45 1768.22,419.11 1773.23,418.77 1778.24,418.44 1783.25,418.12 1788.28,417.79 1793.34,417.48 1798.43,417.17 1803.58,416.86 1809.08,416.55 1815.04,416.22 1821.20,415.89 1827.32,415.57 1833.11,415.26 1838.33,414.99 1842.71,414.77 1846.00,414.60" fill="none" stroke="#f0f000" stroke-width="2.8" stroke-linejoin="round"/>
<rect x="1442.0" y="245.3" width="404.0" height="323.7" fill="none" stroke="#8c8c8c" stroke-width="1.6"/>
<line x1="1436.5" y1="245.30" x2="1442.0" y2="245.30" stroke="#dcdcdc" stroke-width="1.6"/>
<line x1="1436.5" y1="310.04" x2="1442.0" y2="310.04" stroke="#dcdcdc" stroke-width="1.6"/>
<line x1="1436.5" y1="374.78" x2="1442.0" y2="374.78" stroke="#dcdcdc" stroke-width="1.6"/>
<line x1="1436.5" y1="439.52" x2="1442.0" y2="439.52" stroke="#dcdcdc" stroke-width="1.6"/>
<line x1="1436.5" y1="504.26" x2="1442.0" y2="504.26" stroke="#dcdcdc" stroke-width="1.6"/>
<line x1="1436.5" y1="569.00" x2="1442.0" y2="569.00" stroke="#dcdcdc" stroke-width="1.6"/>
<line x1="1442.00" y1="569.0" x2="1442.00" y2="575" stroke="#dcdcdc" stroke-width="1.6"/>
<line x1="1522.80" y1="569.0" x2="1522.80" y2="575" stroke="#dcdcdc" stroke-width="1.6"/>
<line x1="1603.60" y1="569.0" x2="1603.60" y2="575" stroke="#dcdcdc" stroke-width="1.6"/>
<line x1="1684.40" y1="569.0" x2="1684.40" y2="575" stroke="#dcdcdc" stroke-width="1.6"/>
<line x1="1765.20" y1="569.0" x2="1765.20" y2="575" stroke="#dcdcdc" stroke-width="1.6"/>
<line x1="1846.00" y1="569.0" x2="1846.00" y2="575" stroke="#dcdcdc" stroke-width="1.6"/>
</svg>
<div class="t" style="left:1415.89px;top:237.85px;font-size:14.83px;color:#d0d0d0;">2.8</div>
<div class="t" style="left:1415.89px;top:302.59px;font-size:14.83px;color:#d0d0d0;">2.6</div>
<div class="t" style="left:1415.89px;top:367.33px;font-size:14.83px;color:#d0d0d0;">2.4</div>
<div class="t" style="left:1415.89px;top:432.07px;font-size:14.83px;color:#d0d0d0;">2.2</div>
<div class="t" style="left:1428.27px;top:496.81px;font-size:14.83px;color:#d0d0d0;">2</div>
<div class="t" style="left:1415.89px;top:561.55px;font-size:14.83px;color:#d0d0d0;">1.8</div>
<div class="t" style="left:1437.89px;top:577.85px;font-size:14.83px;color:#d0d0d0;">0</div>
<div class="t" style="left:1514.57px;top:577.85px;font-size:14.83px;color:#d0d0d0;">20</div>
<div class="t" style="left:1595.37px;top:577.85px;font-size:14.83px;color:#d0d0d0;">40</div>
<div class="t" style="left:1676.17px;top:577.85px;font-size:14.83px;color:#d0d0d0;">60</div>
<div class="t" style="left:1756.97px;top:577.85px;font-size:14.83px;color:#d0d0d0;">80</div>
<div class="t" style="left:1833.62px;top:577.85px;font-size:14.83px;color:#d0d0d0;">100</div>
<div class="t" style="left:261.30px;top:607.09px;font-size:30.96px;color:#f2f2f2;transform:scaleX(0.9609);">Avg dE2000: 0.5</div>
<div class="t" style="left:680.40px;top:607.09px;font-size:30.96px;color:#f2f2f2;transform:scaleX(0.9291);">Avg CCT: 6507</div>
<div class="t" style="left:1062.50px;top:607.09px;font-size:30.96px;color:#f2f2f2;">Contrast Ratio: 1154</div>
<div class="t" style="left:1470.20px;top:607.09px;font-size:30.96px;color:#f2f2f2;transform:scaleX(0.9736);">Average Gamma: 2.205</div>
<div class="a" style="left:173px;top:653px;width:1700px;height:133px;background:#000000;"></div>
<div class="a" style="left:293.20px;top:659px;width:124px;height:105px;border:1.6px solid #e2e2e2;background:linear-gradient(#05070b 0,#05070b 50%,#000000 50%,#000000 100%)"></div>
<div class="t" style="left:351.97px;top:767.75px;font-size:11.63px;color:#f4f4f4;font-weight:bold;">0</div>
<div class="a" style="left:436.45px;top:659px;width:124px;height:105px;border:1.6px solid #e2e2e2;background:linear-gradient(#171717 0,#171717 50%,#1b1b1b 50%,#1b1b1b 100%)"></div>
<div class="t" style="left:492.00px;top:767.75px;font-size:11.63px;color:#f4f4f4;font-weight:bold;">10</div>
<div class="a" style="left:579.70px;top:659px;width:124px;height:105px;border:1.6px solid #e2e2e2;background:linear-gradient(#333333 0,#333333 50%,#343434 50%,#343434 100%)"></div>
<div class="t" style="left:635.25px;top:767.75px;font-size:11.63px;color:#f4f4f4;font-weight:bold;">20</div>
<div class="a" style="left:722.95px;top:659px;width:124px;height:105px;border:1.6px solid #e2e2e2;background:linear-gradient(#4b4b4b 0,#4b4b4b 50%,#4c4c4c 50%,#4c4c4c 100%)"></div>
<div class="t" style="left:778.50px;top:767.75px;font-size:11.63px;color:#f4f4f4;font-weight:bold;">30</div>
<div class="a" style="left:866.20px;top:659px;width:124px;height:105px;border:1.6px solid #e2e2e2;background:linear-gradient(#676767 0,#676767 50%,#676767 50%,#676767 100%)"></div>
<div class="t" style="left:921.75px;top:767.75px;font-size:11.63px;color:#f4f4f4;font-weight:bold;">40</div>
<div class="a" style="left:1009.45px;top:659px;width:124px;height:105px;border:1.6px solid #e2e2e2;background:linear-gradient(#848484 0,#848484 50%,#818181 50%,#818181 100%)"></div>
<div class="t" style="left:1065.00px;top:767.75px;font-size:11.63px;color:#f4f4f4;font-weight:bold;">50</div>
<div class="a" style="left:1152.70px;top:659px;width:124px;height:105px;border:1.6px solid #e2e2e2;background:linear-gradient(#9c9c9c 0,#9c9c9c 50%,#9a9a9a 50%,#9a9a9a 100%)"></div>
<div class="t" style="left:1208.25px;top:767.75px;font-size:11.63px;color:#f4f4f4;font-weight:bold;">60</div>
<div class="a" style="left:1295.95px;top:659px;width:124px;height:105px;border:1.6px solid #e2e2e2;background:linear-gradient(#b5b5b5 0,#b5b5b5 50%,#b3b3b3 50%,#b3b3b3 100%)"></div>
<div class="t" style="left:1351.50px;top:767.75px;font-size:11.63px;color:#f4f4f4;font-weight:bold;">70</div>
<div class="a" style="left:1439.20px;top:659px;width:124px;height:105px;border:1.6px solid #e2e2e2;background:linear-gradient(#cccccc 0,#cccccc 50%,#cacaca 50%,#cacaca 100%)"></div>
<div class="t" style="left:1494.75px;top:767.75px;font-size:11.63px;color:#f4f4f4;font-weight:bold;">80</div>
<div class="a" style="left:1582.45px;top:659px;width:124px;height:105px;border:1.6px solid #e2e2e2;background:linear-gradient(#e5e5e5 0,#e5e5e5 50%,#e4e4e4 50%,#e4e4e4 100%)"></div>
<div class="t" style="left:1638.00px;top:767.75px;font-size:11.63px;color:#f4f4f4;font-weight:bold;">90</div>
<div class="a" style="left:1725.70px;top:659px;width:124px;height:105px;border:1.6px solid #e2e2e2;background:linear-gradient(#ffffff 0,#ffffff 50%,#ffffff 50%,#ffffff 100%)"></div>
<div class="t" style="left:1777.99px;top:767.75px;font-size:11.63px;color:#f4f4f4;font-weight:bold;">100</div>
<div class="t" style="left:260.41px;top:674.52px;font-size:13.95px;color:#f0f0f0;font-weight:normal;transform-origin:50% 50%;transform:rotate(-90deg) scaleX(0.9538)">Actual</div>
<div class="t" style="left:261.11px;top:733.02px;font-size:13.95px;color:#f0f0f0;font-weight:normal;transform-origin:50% 50%;transform:rotate(-90deg) scaleX(0.9281)">Target</div>
<div class="t" style="left:195.20px;top:829.79px;font-size:29.07px;color:#f2f2f2;transform:scaleX(1.0461);">Current Reading</div>
<div class="t" style="left:195.20px;top:876.99px;font-size:25.29px;color:#f2f2f2;transform:scaleX(0.9936);">x: 0.3127</div>
<div class="t" style="left:347.50px;top:876.99px;font-size:25.29px;color:#f2f2f2;">y: 0.3292</div>
<div class="t" style="left:195.20px;top:910.79px;font-size:25.29px;color:#f2f2f2;transform:scaleX(1.0248);">u': 0.1978</div>
<div class="t" style="left:347.50px;top:910.79px;font-size:25.29px;color:#f2f2f2;transform:scaleX(1.0241);">v': 0.4684</div>
<div class="t" style="left:195.20px;top:944.99px;font-size:25.29px;color:#f2f2f2;transform:scaleX(1.0453);">cd/m²: 204.4446</div>
<div class="t" style="left:195.20px;top:980.19px;font-size:25.29px;color:#f2f2f2;transform:scaleX(0.9792);">ΔE 2000: 0.14</div>
<div class="t" style="left:617.10px;top:808.69px;font-size:13.95px;color:#d8d8d8;transform:scaleX(1.0135);">CIE 1931 xy</div>
<div class="a" style="left:544.5px;top:825.5px;width:257.0px;height:169.0px;overflow:hidden;background:#fff"><svg class="a" style="left:0;top:0" width="257.0" height="169.0" viewBox="0 0 257.0 169.0"><defs><filter id="cblur" x="-20%" y="-20%" width="140%" height="140%"><feGaussianBlur stdDeviation="5"/></filter></defs><g filter="url(#cblur)"><rect x="-20.3" y="-20.4" width="10.9" height="10.9" fill="rgb(128,255,200)"/><rect x="-10.4" y="-20.4" width="10.9" height="10.9" fill="rgb(128,255,200)"/><rect x="-0.5" y="-20.4" width="10.9" height="10.9" fill="rgb(128,255,200)"/><rect x="9.4" y="-20.4" width="10.9" height="10.9" fill="rgb(134,255,200)"/><rect x="19.3" y="-20.4" width="10.9" height="10.9" fill="rgb(141,255,200)"/><rect x="29.2" y="-20.4" width="10.9" height="10.9" fill="rgb(147,255,200)"/><rect x="39.0" y="-20.4" width="10.9" height="10.9" fill="rgb(154,255,200)"/><rect x="48.9" y="-20.4" width="10.9" height="10.9" fill="rgb(160,255,200)"/><rect x="58.8" y="-20.4" width="10.9" height="10.9" fill="rgb(166,255,200)"/><rect x="68.7" y="-20.4" width="10.9" height="10.9" fill="rgb(173,255,201)"/><rect x="78.6" y="-20.4" width="10.9" height="10.9" fill="rgb(179,255,202)"/><rect x="88.5" y="-20.4" width="10.9" height="10.9" fill="rgb(186,255,204)"/><rect x="98.3" y="-20.4" width="10.9" height="10.9" fill="rgb(192,255,205)"/><rect x="108.2" y="-20.4" width="10.9" height="10.9" fill="rgb(198,255,206)"/><rect x="118.1" y="-20.4" width="10.9" height="10.9" fill="rgb(205,255,207)"/><rect x="128.0" y="-20.4" width="10.9" height="10.9" fill="rgb(212,255,208)"/><rect x="137.9" y="-20.4" width="10.9" height="10.9" fill="rgb(219,255,208)"/><rect x="147.8" y="-20.4" width="10.9" height="10.9" fill="rgb(227,255,208)"/><rect x="157.7" y="-20.4" width="10.9" height="10.9" fill="rgb(234,255,208)"/><rect x="167.5" y="-20.4" width="10.9" height="10.9" fill="rgb(242,255,208)"/><rect x="177.4" y="-20.4" width="10.9" height="10.9" fill="rgb(249,255,208)"/><rect x="187.3" y="-20.4" width="10.9" height="10.9" fill="rgb(255,254,207)"/><rect x="197.2" y="-20.4" width="10.9" height="10.9" fill="rgb(255,250,203)"/><rect x="207.1" y="-20.4" width="10.9" height="10.9" fill="rgb(255,247,199)"/><rect x="217.0" y="-20.4" width="10.9" height="10.9" fill="rgb(255,243,196)"/><rect x="226.8" y="-20.4" width="10.9" height="10.9" fill="rgb(255,239,192)"/><rect x="236.7" y="-20.4" width="10.9" height="10.9" fill="rgb(255,236,188)"/><rect x="246.6" y="-20.4" width="10.9" height="10.9" fill="rgb(255,232,184)"/><rect x="256.5" y="-20.4" width="10.9" height="10.9" fill="rgb(255,232,184)"/><rect x="266.4" y="-20.4" width="10.9" height="10.9" fill="rgb(255,232,184)"/><rect x="-20.3" y="-10.4" width="10.9" height="10.9" fill="rgb(128,255,200)"/><rect x="-10.4" y="-10.4" width="10.9" height="10.9" fill="rgb(128,255,200)"/><rect x="-0.5" y="-10.4" width="10.9" height="10.9" fill="rgb(128,255,200)"/><rect x="9.4" y="-10.4" width="10.9" height="10.9" fill="rgb(134,255,200)"/><rect x="19.3" y="-10.4" width="10.9" height="10.9" fill="rgb(141,255,200)"/><rect x="29.2" y="-10.4" width="10.9" height="10.9" fill="rgb(147,255,200)"/><rect x="39.0" y="-10.4" width="10.9" height="10.9" fill="rgb(154,255,200)"/><rect x="48.9" y="-10.4" width="10.9" height="10.9" fill="rgb(160,255,200)"/><rect x="58.8" y="-10.4" width="10.9" height="10.9" fill="rgb(166,255,200)"/><rect x="68.7" y="-10.4" width="10.9" height="10.9" fill="rgb(173,255,201)"/><rect x="78.6" y="-10.4" width="10.9" height="10.9" fill="rgb(179,255,202)"/><rect x="88.5" y="-10.4" width="10.9" height="10.9" fill="rgb(186,255,204)"/><rect x="98.3" y="-10.4" width="10.9" height="10.9" fill="rgb(192,255,205)"/><rect x="108.2" y="-10.4" width="10.9" height="10.9" fill="rgb(198,255,206)"/><rect x="118.1" y="-10.4" width="10.9" height="10.9" fill="rgb(205,255,207)"/><rect x="128.0" y="-10.4" width="10.9" height="10.9" fill="rgb(212,255,208)"/><rect x="137.9" y="-10.4" width="10.9" height="10.9" fill="rgb(219,255,208)"/><rect x="147.8" y="-10.4" width="10.9" height="10.9" fill="rgb(227,255,208)"/><rect x="157.7" y="-10.4" width="10.9" height="10.9" fill="rgb(234,255,208)"/><rect x="167.5" y="-10.4" width="10.9" height="10.9" fill="rgb(242,255,208)"/><rect x="177.4" y="-10.4" width="10.9" height="10.9" fill="rgb(249,255,208)"/><rect x="187.3" y="-10.4" width="10.9" height="10.9" fill="rgb(255,254,207)"/><rect x="197.2" y="-10.4" width="10.9" height="10.9" fill="rgb(255,250,203)"/><rect x="207.1" y="-10.4" width="10.9" height="10.9" fill="rgb(255,247,199)"/><rect x="217.0" y="-10.4" width="10.9" height="10.9" fill="rgb(255,243,196)"/><rect x="226.8" y="-10.4" width="10.9" height="10.9" fill="rgb(255,239,192)"/><rect x="236.7" y="-10.4" width="10.9" height="10.9" fill="rgb(255,236,188)"/><rect x="246.6" y="-10.4" width="10.9" height="10.9" fill="rgb(255,232,184)"/><rect x="256.5" y="-10.4" width="10.9" height="10.9" fill="rgb(255,232,184)"/><rect x="266.4" y="-10.4" width="10.9" height="10.9" fill="rgb(255,232,184)"/><rect x="-20.3" y="-0.5" width="10.9" height="10.9" fill="rgb(128,255,200)"/><rect x="-10.4" y="-0.5" width="10.9" height="10.9" fill="rgb(128,255,200)"/><rect x="-0.5" y="-0.5" width="10.9" height="10.9" fill="rgb(128,255,200)"/><rect x="9.4" y="-0.5" width="10.9" height="10.9" fill="rgb(134,255,200)"/><rect x="19.3" y="-0.5" width="10.9" height="10.9" fill="rgb(141,255,200)"/><rect x="29.2" y="-0.5" width="10.9" height="10.9" fill="rgb(147,255,200)"/><rect x="39.0" y="-0.5" width="10.9" height="10.9" fill="rgb(154,255,200)"/><rect x="48.9" y="-0.5" width="10.9" height="10.9" fill="rgb(160,255,200)"/><rect x="58.8" y="-0.5" width="10.9" height="10.9" fill="rgb(166,255,200)"/><rect x="68.7" y="-0.5" width="10.9" height="10.9" fill="rgb(173,255,201)"/><rect x="78.6" y="-0.5" width="10.9" height="10.9" fill="rgb(179,255,202)"/><rect x="88.5" y="-0.5" width="10.9" height="10.9" fill="rgb(186,255,204)"/><rect x="98.3" y="-0.5" width="10.9" height="10.9" fill="rgb(192,255,205)"/><rect x="108.2" y="-0.5" width="10.9" height="10.9" fill="rgb(198,255,206)"/><rect x="118.1" y="-0.5" width="10.9" height="10.9" fill="rgb(205,255,207)"/><rect x="128.0" y="-0.5" width="10.9" height="10.9" fill="rgb(212,255,208)"/><rect x="137.9" y="-0.5" width="10.9" height="10.9" fill="rgb(219,255,208)"/><rect x="147.8" y="-0.5" width="10.9" height="10.9" fill="rgb(227,255,208)"/><rect x="157.7" y="-0.5" width="10.9" height="10.9" fill="rgb(234,255,208)"/><rect x="167.5" y="-0.5" width="10.9" height="10.9" fill="rgb(242,255,208)"/><rect x="177.4" y="-0.5" width="10.9" height="10.9" fill="rgb(249,255,208)"/><rect x="187.3" y="-0.5" width="10.9" height="10.9" fill="rgb(255,254,207)"/><rect x="197.2" y="-0.5" width="10.9" height="10.9" fill="rgb(255,250,203)"/><rect x="207.1" y="-0.5" width="10.9" height="10.9" fill="rgb(255,247,199)"/><rect x="217.0" y="-0.5" width="10.9" height="10.9" fill="rgb(255,243,196)"/><rect x="226.8" y="-0.5" width="10.9" height="10.9" fill="rgb(255,239,192)"/><rect x="236.7" y="-0.5" width="10.9" height="10.9" fill="rgb(255,236,188)"/><rect x="246.6" y="-0.5" width="10.9" height="10.9" fill="rgb(255,232,184)"/><rect x="256.5" y="-0.5" width="10.9" height="10.9" fill="rgb(255,232,184)"/><rect x="266.4" y="-0.5" width="10.9" height="10.9" fill="rgb(255,232,184)"/><rect x="-20.3" y="9.4" width="10.9" height="10.9" fill="rgb(132,255,206)"/><rect x="-10.4" y="9.4" width="10.9" height="10.9" fill="rgb(132,255,206)"/><rect x="-0.5" y="9.4" width="10.9" height="10.9" fill="rgb(132,255,206)"/><rect x="9.4" y="9.4" width="10.9" height="10.9" fill="rgb(138,255,206)"/><rect x="19.3" y="9.4" width="10.9" height="10.9" fill="rgb(145,255,206)"/><rect x="29.2" y="9.4" width="10.9" height="10.9" fill="rgb(151,255,206)"/><rect x="39.0" y="9.4" width="10.9" height="10.9" fill="rgb(158,255,206)"/><rect x="48.9" y="9.4" width="10.9" height="10.9" fill="rgb(164,255,206)"/><rect x="58.8" y="9.4" width="10.9" height="10.9" fill="rgb(170,255,206)"/><rect x="68.7" y="9.4" width="10.9" height="10.9" fill="rgb(177,255,207)"/><rect x="78.6" y="9.4" width="10.9" height="10.9" fill="rgb(183,255,208)"/><rect x="88.5" y="9.4" width="10.9" height="10.9" fill="rgb(190,255,210)"/><rect x="98.3" y="9.4" width="10.9" height="10.9" fill="rgb(196,255,211)"/><rect x="108.2" y="9.4" width="10.9" height="10.9" fill="rgb(202,255,212)"/><rect x="118.1" y="9.4" width="10.9" height="10.9" fill="rgb(209,255,213)"/><rect x="128.0" y="9.4" width="10.9" height="10.9" fill="rgb(215,255,214)"/><rect x="137.9" y="9.4" width="10.9" height="10.9" fill="rgb(222,255,214)"/><rect x="147.8" y="9.4" width="10.9" height="10.9" fill="rgb(229,255,214)"/><rect x="157.7" y="9.4" width="10.9" height="10.9" fill="rgb(236,255,214)"/><rect x="167.5" y="9.4" width="10.9" height="10.9" fill="rgb(243,255,214)"/><rect x="177.4" y="9.4" width="10.9" height="10.9" fill="rgb(250,255,214)"/><rect x="187.3" y="9.4" width="10.9" height="10.9" fill="rgb(255,254,213)"/><rect x="197.2" y="9.4" width="10.9" height="10.9" fill="rgb(255,250,208)"/><rect x="207.1" y="9.4" width="10.9" height="10.9" fill="rgb(255,245,203)"/><rect x="217.0" y="9.4" width="10.9" height="10.9" fill="rgb(255,241,198)"/><rect x="226.8" y="9.4" width="10.9" height="10.9" fill="rgb(255,237,194)"/><rect x="236.7" y="9.4" width="10.9" height="10.9" fill="rgb(255,232,189)"/><rect x="246.6" y="9.4" width="10.9" height="10.9" fill="rgb(255,228,184)"/><rect x="256.5" y="9.4" width="10.9" height="10.9" fill="rgb(255,228,184)"/><rect x="266.4" y="9.4" width="10.9" height="10.9" fill="rgb(255,228,184)"/><rect x="-20.3" y="19.4" width="10.9" height="10.9" fill="rgb(136,255,212)"/><rect x="-10.4" y="19.4" width="10.9" height="10.9" fill="rgb(136,255,212)"/><rect x="-0.5" y="19.4" width="10.9" height="10.9" fill="rgb(136,255,212)"/><rect x="9.4" y="19.4" width="10.9" height="10.9" fill="rgb(142,255,212)"/><rect x="19.3" y="19.4" width="10.9" height="10.9" fill="rgb(149,255,212)"/><rect x="29.2" y="19.4" width="10.9" height="10.9" fill="rgb(155,255,212)"/><rect x="39.0" y="19.4" width="10.9" height="10.9" fill="rgb(162,255,212)"/><rect x="48.9" y="19.4" width="10.9" height="10.9" fill="rgb(168,255,212)"/><rect x="58.8" y="19.4" width="10.9" height="10.9" fill="rgb(174,255,212)"/><rect x="68.7" y="19.4" width="10.9" height="10.9" fill="rgb(181,255,213)"/><rect x="78.6" y="19.4" width="10.9" height="10.9" fill="rgb(187,255,214)"/><rect x="88.5" y="19.4" width="10.9" height="10.9" fill="rgb(194,255,216)"/><rect x="98.3" y="19.4" width="10.9" height="10.9" fill="rgb(200,255,217)"/><rect x="108.2" y="19.4" width="10.9" height="10.9" fill="rgb(206,255,218)"/><rect x="118.1" y="19.4" width="10.9" height="10.9" fill="rgb(213,255,219)"/><rect x="128.0" y="19.4" width="10.9" height="10.9" fill="rgb(219,255,220)"/><rect x="137.9" y="19.4" width="10.9" height="10.9" fill="rgb(225,255,220)"/><rect x="147.8" y="19.4" width="10.9" height="10.9" fill="rgb(232,255,220)"/><rect x="157.7" y="19.4" width="10.9" height="10.9" fill="rgb(238,255,220)"/><rect x="167.5" y="19.4" width="10.9" height="10.9" fill="rgb(244,255,220)"/><rect x="177.4" y="19.4" width="10.9" height="10.9" fill="rgb(250,255,220)"/><rect x="187.3" y="19.4" width="10.9" height="10.9" fill="rgb(255,254,219)"/><rect x="197.2" y="19.4" width="10.9" height="10.9" fill="rgb(255,249,213)"/><rect x="207.1" y="19.4" width="10.9" height="10.9" fill="rgb(255,244,207)"/><rect x="217.0" y="19.4" width="10.9" height="10.9" fill="rgb(255,239,201)"/><rect x="226.8" y="19.4" width="10.9" height="10.9" fill="rgb(255,234,196)"/><rect x="236.7" y="19.4" width="10.9" height="10.9" fill="rgb(255,229,190)"/><rect x="246.6" y="19.4" width="10.9" height="10.9" fill="rgb(255,224,184)"/><rect x="256.5" y="19.4" width="10.9" height="10.9" fill="rgb(255,224,184)"/><rect x="266.4" y="19.4" width="10.9" height="10.9" fill="rgb(255,224,184)"/><rect x="-20.3" y="29.3" width="10.9" height="10.9" fill="rgb(140,255,218)"/><rect x="-10.4" y="29.3" width="10.9" height="10.9" fill="rgb(140,255,218)"/><rect x="-0.5" y="29.3" width="10.9" height="10.9" fill="rgb(140,255,218)"/><rect x="9.4" y="29.3" width="10.9" height="10.9" fill="rgb(146,255,218)"/><rect x="19.3" y="29.3" width="10.9" height="10.9" fill="rgb(153,255,218)"/><rect x="29.2" y="29.3" width="10.9" height="10.9" fill="rgb(159,255,218)"/><rect x="39.0" y="29.3" width="10.9" height="10.9" fill="rgb(166,255,218)"/><rect x="48.9" y="29.3" width="10.9" height="10.9" fill="rgb(172,255,218)"/><rect x="58.8" y="29.3" width="10.9" height="10.9" fill="rgb(178,255,218)"/><rect x="68.7" y="29.3" width="10.9" height="10.9" fill="rgb(185,255,219)"/><rect x="78.6" y="29.3" width="10.9" height="10.9" fill="rgb(191,255,220)"/><rect x="88.5" y="29.3" width="10.9" height="10.9" fill="rgb(198,255,222)"/><rect x="98.3" y="29.3" width="10.9" height="10.9" fill="rgb(204,255,223)"/><rect x="108.2" y="29.3" width="10.9" height="10.9" fill="rgb(210,255,224)"/><rect x="118.1" y="29.3" width="10.9" height="10.9" fill="rgb(217,255,225)"/><rect x="128.0" y="29.3" width="10.9" height="10.9" fill="rgb(223,255,226)"/><rect x="137.9" y="29.3" width="10.9" height="10.9" fill="rgb(228,255,226)"/><rect x="147.8" y="29.3" width="10.9" height="10.9" fill="rgb(234,255,226)"/><rect x="157.7" y="29.3" width="10.9" height="10.9" fill="rgb(240,255,226)"/><rect x="167.5" y="29.3" width="10.9" height="10.9" fill="rgb(245,255,226)"/><rect x="177.4" y="29.3" width="10.9" height="10.9" fill="rgb(251,255,226)"/><rect x="187.3" y="29.3" width="10.9" height="10.9" fill="rgb(255,254,224)"/><rect x="197.2" y="29.3" width="10.9" height="10.9" fill="rgb(255,248,218)"/><rect x="207.1" y="29.3" width="10.9" height="10.9" fill="rgb(255,242,211)"/><rect x="217.0" y="29.3" width="10.9" height="10.9" fill="rgb(255,237,204)"/><rect x="226.8" y="29.3" width="10.9" height="10.9" fill="rgb(255,231,197)"/><rect x="236.7" y="29.3" width="10.9" height="10.9" fill="rgb(255,226,191)"/><rect x="246.6" y="29.3" width="10.9" height="10.9" fill="rgb(255,220,184)"/><rect x="256.5" y="29.3" width="10.9" height="10.9" fill="rgb(255,220,184)"/><rect x="266.4" y="29.3" width="10.9" height="10.9" fill="rgb(255,220,184)"/><rect x="-20.3" y="39.3" width="10.9" height="10.9" fill="rgb(144,255,224)"/><rect x="-10.4" y="39.3" width="10.9" height="10.9" fill="rgb(144,255,224)"/><rect x="-0.5" y="39.3" width="10.9" height="10.9" fill="rgb(144,255,224)"/><rect x="9.4" y="39.3" width="10.9" height="10.9" fill="rgb(150,255,224)"/><rect x="19.3" y="39.3" width="10.9" height="10.9" fill="rgb(157,255,224)"/><rect x="29.2" y="39.3" width="10.9" height="10.9" fill="rgb(163,255,224)"/><rect x="39.0" y="39.3" width="10.9" height="10.9" fill="rgb(170,255,224)"/><rect x="48.9" y="39.3" width="10.9" height="10.9" fill="rgb(176,255,224)"/><rect x="58.8" y="39.3" width="10.9" height="10.9" fill="rgb(182,255,224)"/><rect x="68.7" y="39.3" width="10.9" height="10.9" fill="rgb(189,255,225)"/><rect x="78.6" y="39.3" width="10.9" height="10.9" fill="rgb(195,255,226)"/><rect x="88.5" y="39.3" width="10.9" height="10.9" fill="rgb(202,255,228)"/><rect x="98.3" y="39.3" width="10.9" height="10.9" fill="rgb(208,255,229)"/><rect x="108.2" y="39.3" width="10.9" height="10.9" fill="rgb(214,255,230)"/><rect x="118.1" y="39.3" width="10.9" height="10.9" fill="rgb(221,255,231)"/><rect x="128.0" y="39.3" width="10.9" height="10.9" fill="rgb(226,255,232)"/><rect x="137.9" y="39.3" width="10.9" height="10.9" fill="rgb(231,255,232)"/><rect x="147.8" y="39.3" width="10.9" height="10.9" fill="rgb(236,255,232)"/><rect x="157.7" y="39.3" width="10.9" height="10.9" fill="rgb(241,255,232)"/><rect x="167.5" y="39.3" width="10.9" height="10.9" fill="rgb(246,255,232)"/><rect x="177.4" y="39.3" width="10.9" height="10.9" fill="rgb(251,255,232)"/><rect x="187.3" y="39.3" width="10.9" height="10.9" fill="rgb(255,253,230)"/><rect x="197.2" y="39.3" width="10.9" height="10.9" fill="rgb(255,247,222)"/><rect x="207.1" y="39.3" width="10.9" height="10.9" fill="rgb(255,241,215)"/><rect x="217.0" y="39.3" width="10.9" height="10.9" fill="rgb(255,235,207)"/><rect x="226.8" y="39.3" width="10.9" height="10.9" fill="rgb(255,228,199)"/><rect x="236.7" y="39.3" width="10.9" height="10.9" fill="rgb(255,222,192)"/><rect x="246.6" y="39.3" width="10.9" height="10.9" fill="rgb(255,216,184)"/><rect x="256.5" y="39.3" width="10.9" height="10.9" fill="rgb(255,216,184)"/><rect x="266.4" y="39.3" width="10.9" height="10.9" fill="rgb(255,216,184)"/><rect x="-20.3" y="49.2" width="10.9" height="10.9" fill="rgb(148,255,232)"/><rect x="-10.4" y="49.2" width="10.9" height="10.9" fill="rgb(148,255,232)"/><rect x="-0.5" y="49.2" width="10.9" height="10.9" fill="rgb(148,255,232)"/><rect x="9.4" y="49.2" width="10.9" height="10.9" fill="rgb(154,255,232)"/><rect x="19.3" y="49.2" width="10.9" height="10.9" fill="rgb(161,255,232)"/><rect x="29.2" y="49.2" width="10.9" height="10.9" fill="rgb(167,255,232)"/><rect x="39.0" y="49.2" width="10.9" height="10.9" fill="rgb(174,255,232)"/><rect x="48.9" y="49.2" width="10.9" height="10.9" fill="rgb(180,255,232)"/><rect x="58.8" y="49.2" width="10.9" height="10.9" fill="rgb(186,255,232)"/><rect x="68.7" y="49.2" width="10.9" height="10.9" fill="rgb(193,255,232)"/><rect x="78.6" y="49.2" width="10.9" height="10.9" fill="rgb(199,255,233)"/><rect x="88.5" y="49.2" width="10.9" height="10.9" fill="rgb(206,255,234)"/><rect x="98.3" y="49.2" width="10.9" height="10.9" fill="rgb(212,255,234)"/><rect x="108.2" y="49.2" width="10.9" height="10.9" fill="rgb(218,255,235)"/><rect x="118.1" y="49.2" width="10.9" height="10.9" fill="rgb(225,255,236)"/><rect x="128.0" y="49.2" width="10.9" height="10.9" fill="rgb(230,255,236)"/><rect x="137.9" y="49.2" width="10.9" height="10.9" fill="rgb(234,254,235)"/><rect x="147.8" y="49.2" width="10.9" height="10.9" fill="rgb(239,254,234)"/><rect x="157.7" y="49.2" width="10.9" height="10.9" fill="rgb(243,253,233)"/><rect x="167.5" y="49.2" width="10.9" height="10.9" fill="rgb(247,252,232)"/><rect x="177.4" y="49.2" width="10.9" height="10.9" fill="rgb(252,252,231)"/><rect x="187.3" y="49.2" width="10.9" height="10.9" fill="rgb(255,250,228)"/><rect x="197.2" y="49.2" width="10.9" height="10.9" fill="rgb(255,243,220)"/><rect x="207.1" y="49.2" width="10.9" height="10.9" fill="rgb(255,236,213)"/><rect x="217.0" y="49.2" width="10.9" height="10.9" fill="rgb(255,230,205)"/><rect x="226.8" y="49.2" width="10.9" height="10.9" fill="rgb(255,223,197)"/><rect x="236.7" y="49.2" width="10.9" height="10.9" fill="rgb(255,217,190)"/><rect x="246.6" y="49.2" width="10.9" height="10.9" fill="rgb(255,210,182)"/><rect x="256.5" y="49.2" width="10.9" height="10.9" fill="rgb(255,210,182)"/><rect x="266.4" y="49.2" width="10.9" height="10.9" fill="rgb(255,210,182)"/><rect x="-20.3" y="59.1" width="10.9" height="10.9" fill="rgb(152,255,240)"/><rect x="-10.4" y="59.1" width="10.9" height="10.9" fill="rgb(152,255,240)"/><rect x="-0.5" y="59.1" width="10.9" height="10.9" fill="rgb(152,255,240)"/><rect x="9.4" y="59.1" width="10.9" height="10.9" fill="rgb(158,255,240)"/><rect x="19.3" y="59.1" width="10.9" height="10.9" fill="rgb(165,255,240)"/><rect x="29.2" y="59.1" width="10.9" height="10.9" fill="rgb(171,255,240)"/><rect x="39.0" y="59.1" width="10.9" height="10.9" fill="rgb(178,255,240)"/><rect x="48.9" y="59.1" width="10.9" height="10.9" fill="rgb(184,255,240)"/><rect x="58.8" y="59.1" width="10.9" height="10.9" fill="rgb(190,255,240)"/><rect x="68.7" y="59.1" width="10.9" height="10.9" fill="rgb(197,255,240)"/><rect x="78.6" y="59.1" width="10.9" height="10.9" fill="rgb(203,255,240)"/><rect x="88.5" y="59.1" width="10.9" height="10.9" fill="rgb(210,255,240)"/><rect x="98.3" y="59.1" width="10.9" height="10.9" fill="rgb(216,255,240)"/><rect x="108.2" y="59.1" width="10.9" height="10.9" fill="rgb(222,255,240)"/><rect x="118.1" y="59.1" width="10.9" height="10.9" fill="rgb(229,255,240)"/><rect x="128.0" y="59.1" width="10.9" height="10.9" fill="rgb(234,254,239)"/><rect x="137.9" y="59.1" width="10.9" height="10.9" fill="rgb(238,253,237)"/><rect x="147.8" y="59.1" width="10.9" height="10.9" fill="rgb(241,252,235)"/><rect x="157.7" y="59.1" width="10.9" height="10.9" fill="rgb(245,251,233)"/><rect x="167.5" y="59.1" width="10.9" height="10.9" fill="rgb(249,250,231)"/><rect x="177.4" y="59.1" width="10.9" height="10.9" fill="rgb(252,248,229)"/><rect x="187.3" y="59.1" width="10.9" height="10.9" fill="rgb(255,246,226)"/><rect x="197.2" y="59.1" width="10.9" height="10.9" fill="rgb(255,239,218)"/><rect x="207.1" y="59.1" width="10.9" height="10.9" fill="rgb(255,232,211)"/><rect x="217.0" y="59.1" width="10.9" height="10.9" fill="rgb(255,225,203)"/><rect x="226.8" y="59.1" width="10.9" height="10.9" fill="rgb(255,218,195)"/><rect x="236.7" y="59.1" width="10.9" height="10.9" fill="rgb(255,211,188)"/><rect x="246.6" y="59.1" width="10.9" height="10.9" fill="rgb(255,204,180)"/><rect x="256.5" y="59.1" width="10.9" height="10.9" fill="rgb(255,204,180)"/><rect x="266.4" y="59.1" width="10.9" height="10.9" fill="rgb(255,204,180)"/><rect x="-20.3" y="69.1" width="10.9" height="10.9" fill="rgb(156,255,247)"/><rect x="-10.4" y="69.1" width="10.9" height="10.9" fill="rgb(156,255,247)"/><rect x="-0.5" y="69.1" width="10.9" height="10.9" fill="rgb(156,255,247)"/><rect x="9.4" y="69.1" width="10.9" height="10.9" fill="rgb(162,255,247)"/><rect x="19.3" y="69.1" width="10.9" height="10.9" fill="rgb(169,255,247)"/><rect x="29.2" y="69.1" width="10.9" height="10.9" fill="rgb(175,255,247)"/><rect x="39.0" y="69.1" width="10.9" height="10.9" fill="rgb(182,255,247)"/><rect x="48.9" y="69.1" width="10.9" height="10.9" fill="rgb(188,255,247)"/><rect x="58.8" y="69.1" width="10.9" height="10.9" fill="rgb(194,255,247)"/><rect x="68.7" y="69.1" width="10.9" height="10.9" fill="rgb(201,255,247)"/><rect x="78.6" y="69.1" width="10.9" height="10.9" fill="rgb(207,255,246)"/><rect x="88.5" y="69.1" width="10.9" height="10.9" fill="rgb(214,255,246)"/><rect x="98.3" y="69.1" width="10.9" height="10.9" fill="rgb(220,255,245)"/><rect x="108.2" y="69.1" width="10.9" height="10.9" fill="rgb(226,255,245)"/><rect x="118.1" y="69.1" width="10.9" height="10.9" fill="rgb(233,255,244)"/><rect x="128.0" y="69.1" width="10.9" height="10.9" fill="rgb(238,254,243)"/><rect x="137.9" y="69.1" width="10.9" height="10.9" fill="rgb(241,252,240)"/><rect x="147.8" y="69.1" width="10.9" height="10.9" fill="rgb(244,250,237)"/><rect x="157.7" y="69.1" width="10.9" height="10.9" fill="rgb(247,249,234)"/><rect x="167.5" y="69.1" width="10.9" height="10.9" fill="rgb(250,247,231)"/><rect x="177.4" y="69.1" width="10.9" height="10.9" fill="rgb(253,245,228)"/><rect x="187.3" y="69.1" width="10.9" height="10.9" fill="rgb(255,242,224)"/><rect x="197.2" y="69.1" width="10.9" height="10.9" fill="rgb(255,235,216)"/><rect x="207.1" y="69.1" width="10.9" height="10.9" fill="rgb(255,227,209)"/><rect x="217.0" y="69.1" width="10.9" height="10.9" fill="rgb(255,220,201)"/><rect x="226.8" y="69.1" width="10.9" height="10.9" fill="rgb(255,213,193)"/><rect x="236.7" y="69.1" width="10.9" height="10.9" fill="rgb(255,205,186)"/><rect x="246.6" y="69.1" width="10.9" height="10.9" fill="rgb(255,198,178)"/><rect x="256.5" y="69.1" width="10.9" height="10.9" fill="rgb(255,198,178)"/><rect x="266.4" y="69.1" width="10.9" height="10.9" fill="rgb(255,198,178)"/><rect x="-20.3" y="79.0" width="10.9" height="10.9" fill="rgb(160,255,255)"/><rect x="-10.4" y="79.0" width="10.9" height="10.9" fill="rgb(160,255,255)"/><rect x="-0.5" y="79.0" width="10.9" height="10.9" fill="rgb(160,255,255)"/><rect x="9.4" y="79.0" width="10.9" height="10.9" fill="rgb(166,255,255)"/><rect x="19.3" y="79.0" width="10.9" height="10.9" fill="rgb(173,255,255)"/><rect x="29.2" y="79.0" width="10.9" height="10.9" fill="rgb(179,255,255)"/><rect x="39.0" y="79.0" width="10.9" height="10.9" fill="rgb(186,255,255)"/><rect x="48.9" y="79.0" width="10.9" height="10.9" fill="rgb(192,255,255)"/><rect x="58.8" y="79.0" width="10.9" height="10.9" fill="rgb(198,255,255)"/><rect x="68.7" y="79.0" width="10.9" height="10.9" fill="rgb(205,255,254)"/><rect x="78.6" y="79.0" width="10.9" height="10.9" fill="rgb(211,255,253)"/><rect x="88.5" y="79.0" width="10.9" height="10.9" fill="rgb(218,255,252)"/><rect x="98.3" y="79.0" width="10.9" height="10.9" fill="rgb(224,255,251)"/><rect x="108.2" y="79.0" width="10.9" height="10.9" fill="rgb(230,255,250)"/><rect x="118.1" y="79.0" width="10.9" height="10.9" fill="rgb(237,255,249)"/><rect x="128.0" y="79.0" width="10.9" height="10.9" fill="rgb(241,254,246)"/><rect x="137.9" y="79.0" width="10.9" height="10.9" fill="rgb(244,251,242)"/><rect x="147.8" y="79.0" width="10.9" height="10.9" fill="rgb(246,249,238)"/><rect x="157.7" y="79.0" width="10.9" height="10.9" fill="rgb(248,247,235)"/><rect x="167.5" y="79.0" width="10.9" height="10.9" fill="rgb(251,244,231)"/><rect x="177.4" y="79.0" width="10.9" height="10.9" fill="rgb(253,242,227)"/><rect x="187.3" y="79.0" width="10.9" height="10.9" fill="rgb(255,238,222)"/><rect x="197.2" y="79.0" width="10.9" height="10.9" fill="rgb(255,230,214)"/><rect x="207.1" y="79.0" width="10.9" height="10.9" fill="rgb(255,223,207)"/><rect x="217.0" y="79.0" width="10.9" height="10.9" fill="rgb(255,215,199)"/><rect x="226.8" y="79.0" width="10.9" height="10.9" fill="rgb(255,207,191)"/><rect x="236.7" y="79.0" width="10.9" height="10.9" fill="rgb(255,200,184)"/><rect x="246.6" y="79.0" width="10.9" height="10.9" fill="rgb(255,192,176)"/><rect x="256.5" y="79.0" width="10.9" height="10.9" fill="rgb(255,192,176)"/><rect x="266.4" y="79.0" width="10.9" height="10.9" fill="rgb(255,192,176)"/><rect x="-20.3" y="89.0" width="10.9" height="10.9" fill="rgb(160,247,255)"/><rect x="-10.4" y="89.0" width="10.9" height="10.9" fill="rgb(160,247,255)"/><rect x="-0.5" y="89.0" width="10.9" height="10.9" fill="rgb(160,247,255)"/><rect x="9.4" y="89.0" width="10.9" height="10.9" fill="rgb(167,248,255)"/><rect x="19.3" y="89.0" width="10.9" height="10.9" fill="rgb(173,248,255)"/><rect x="29.2" y="89.0" width="10.9" height="10.9" fill="rgb(180,248,255)"/><rect x="39.0" y="89.0" width="10.9" height="10.9" fill="rgb(187,249,255)"/><rect x="48.9" y="89.0" width="10.9" height="10.9" fill="rgb(194,249,255)"/><rect x="58.8" y="89.0" width="10.9" height="10.9" fill="rgb(200,249,255)"/><rect x="68.7" y="89.0" width="10.9" height="10.9" fill="rgb(207,249,254)"/><rect x="78.6" y="89.0" width="10.9" height="10.9" fill="rgb(213,249,254)"/><rect x="88.5" y="89.0" width="10.9" height="10.9" fill="rgb(220,249,253)"/><rect x="98.3" y="89.0" width="10.9" height="10.9" fill="rgb(226,249,252)"/><rect x="108.2" y="89.0" width="10.9" height="10.9" fill="rgb(232,249,251)"/><rect x="118.1" y="89.0" width="10.9" height="10.9" fill="rgb(239,249,250)"/><rect x="128.0" y="89.0" width="10.9" height="10.9" fill="rgb(243,248,248)"/><rect x="137.9" y="89.0" width="10.9" height="10.9" fill="rgb(245,245,244)"/><rect x="147.8" y="89.0" width="10.9" height="10.9" fill="rgb(247,242,239)"/><rect x="157.7" y="89.0" width="10.9" height="10.9" fill="rgb(249,240,235)"/><rect x="167.5" y="89.0" width="10.9" height="10.9" fill="rgb(251,237,231)"/><rect x="177.4" y="89.0" width="10.9" height="10.9" fill="rgb(253,234,227)"/><rect x="187.3" y="89.0" width="10.9" height="10.9" fill="rgb(255,230,222)"/><rect x="197.2" y="89.0" width="10.9" height="10.9" fill="rgb(255,223,215)"/><rect x="207.1" y="89.0" width="10.9" height="10.9" fill="rgb(255,215,207)"/><rect x="217.0" y="89.0" width="10.9" height="10.9" fill="rgb(255,208,200)"/><rect x="226.8" y="89.0" width="10.9" height="10.9" fill="rgb(255,201,193)"/><rect x="236.7" y="89.0" width="10.9" height="10.9" fill="rgb(255,193,185)"/><rect x="246.6" y="89.0" width="10.9" height="10.9" fill="rgb(255,186,178)"/><rect x="256.5" y="89.0" width="10.9" height="10.9" fill="rgb(255,186,178)"/><rect x="266.4" y="89.0" width="10.9" height="10.9" fill="rgb(255,186,178)"/><rect x="-20.3" y="98.9" width="10.9" height="10.9" fill="rgb(160,240,255)"/><rect x="-10.4" y="98.9" width="10.9" height="10.9" fill="rgb(160,240,255)"/><rect x="-0.5" y="98.9" width="10.9" height="10.9" fill="rgb(160,240,255)"/><rect x="9.4" y="98.9" width="10.9" height="10.9" fill="rgb(167,240,255)"/><rect x="19.3" y="98.9" width="10.9" height="10.9" fill="rgb(174,241,255)"/><rect x="29.2" y="98.9" width="10.9" height="10.9" fill="rgb(181,241,255)"/><rect x="39.0" y="98.9" width="10.9" height="10.9" fill="rgb(188,242,255)"/><rect x="48.9" y="98.9" width="10.9" height="10.9" fill="rgb(195,243,255)"/><rect x="58.8" y="98.9" width="10.9" height="10.9" fill="rgb(202,243,255)"/><rect x="68.7" y="98.9" width="10.9" height="10.9" fill="rgb(209,244,255)"/><rect x="78.6" y="98.9" width="10.9" height="10.9" fill="rgb(215,244,254)"/><rect x="88.5" y="98.9" width="10.9" height="10.9" fill="rgb(222,244,253)"/><rect x="98.3" y="98.9" width="10.9" height="10.9" fill="rgb(228,244,253)"/><rect x="108.2" y="98.9" width="10.9" height="10.9" fill="rgb(234,244,252)"/><rect x="118.1" y="98.9" width="10.9" height="10.9" fill="rgb(241,244,252)"/><rect x="128.0" y="98.9" width="10.9" height="10.9" fill="rgb(245,242,249)"/><rect x="137.9" y="98.9" width="10.9" height="10.9" fill="rgb(247,239,245)"/><rect x="147.8" y="98.9" width="10.9" height="10.9" fill="rgb(248,236,240)"/><rect x="157.7" y="98.9" width="10.9" height="10.9" fill="rgb(250,233,236)"/><rect x="167.5" y="98.9" width="10.9" height="10.9" fill="rgb(252,229,232)"/><rect x="177.4" y="98.9" width="10.9" height="10.9" fill="rgb(254,226,227)"/><rect x="187.3" y="98.9" width="10.9" height="10.9" fill="rgb(255,222,222)"/><rect x="197.2" y="98.9" width="10.9" height="10.9" fill="rgb(255,215,215)"/><rect x="207.1" y="98.9" width="10.9" height="10.9" fill="rgb(255,208,208)"/><rect x="217.0" y="98.9" width="10.9" height="10.9" fill="rgb(255,201,201)"/><rect x="226.8" y="98.9" width="10.9" height="10.9" fill="rgb(255,194,194)"/><rect x="236.7" y="98.9" width="10.9" height="10.9" fill="rgb(255,187,187)"/><rect x="246.6" y="98.9" width="10.9" height="10.9" fill="rgb(255,180,180)"/><rect x="256.5" y="98.9" width="10.9" height="10.9" fill="rgb(255,180,180)"/><rect x="266.4" y="98.9" width="10.9" height="10.9" fill="rgb(255,180,180)"/><rect x="-20.3" y="108.9" width="10.9" height="10.9" fill="rgb(160,232,255)"/><rect x="-10.4" y="108.9" width="10.9" height="10.9" fill="rgb(160,232,255)"/><rect x="-0.5" y="108.9" width="10.9" height="10.9" fill="rgb(160,232,255)"/><rect x="9.4" y="108.9" width="10.9" height="10.9" fill="rgb(167,233,255)"/><rect x="19.3" y="108.9" width="10.9" height="10.9" fill="rgb(175,234,255)"/><rect x="29.2" y="108.9" width="10.9" height="10.9" fill="rgb(182,235,255)"/><rect x="39.0" y="108.9" width="10.9" height="10.9" fill="rgb(189,236,255)"/><rect x="48.9" y="108.9" width="10.9" height="10.9" fill="rgb(197,237,255)"/><rect x="58.8" y="108.9" width="10.9" height="10.9" fill="rgb(204,238,255)"/><rect x="68.7" y="108.9" width="10.9" height="10.9" fill="rgb(211,238,255)"/><rect x="78.6" y="108.9" width="10.9" height="10.9" fill="rgb(217,238,255)"/><rect x="88.5" y="108.9" width="10.9" height="10.9" fill="rgb(224,238,254)"/><rect x="98.3" y="108.9" width="10.9" height="10.9" fill="rgb(230,238,254)"/><rect x="108.2" y="108.9" width="10.9" height="10.9" fill="rgb(236,238,254)"/><rect x="118.1" y="108.9" width="10.9" height="10.9" fill="rgb(243,238,253)"/><rect x="128.0" y="108.9" width="10.9" height="10.9" fill="rgb(247,236,251)"/><rect x="137.9" y="108.9" width="10.9" height="10.9" fill="rgb(248,233,246)"/><rect x="147.8" y="108.9" width="10.9" height="10.9" fill="rgb(250,229,242)"/><rect x="157.7" y="108.9" width="10.9" height="10.9" fill="rgb(251,226,237)"/><rect x="167.5" y="108.9" width="10.9" height="10.9" fill="rgb(252,222,232)"/><rect x="177.4" y="108.9" width="10.9" height="10.9" fill="rgb(254,219,228)"/><rect x="187.3" y="108.9" width="10.9" height="10.9" fill="rgb(255,214,222)"/><rect x="197.2" y="108.9" width="10.9" height="10.9" fill="rgb(255,208,216)"/><rect x="207.1" y="108.9" width="10.9" height="10.9" fill="rgb(255,201,209)"/><rect x="217.0" y="108.9" width="10.9" height="10.9" fill="rgb(255,194,202)"/><rect x="226.8" y="108.9" width="10.9" height="10.9" fill="rgb(255,187,195)"/><rect x="236.7" y="108.9" width="10.9" height="10.9" fill="rgb(255,181,189)"/><rect x="246.6" y="108.9" width="10.9" height="10.9" fill="rgb(255,174,182)"/><rect x="256.5" y="108.9" width="10.9" height="10.9" fill="rgb(255,174,182)"/><rect x="266.4" y="108.9" width="10.9" height="10.9" fill="rgb(255,174,182)"/><rect x="-20.3" y="118.8" width="10.9" height="10.9" fill="rgb(160,224,255)"/><rect x="-10.4" y="118.8" width="10.9" height="10.9" fill="rgb(160,224,255)"/><rect x="-0.5" y="118.8" width="10.9" height="10.9" fill="rgb(160,224,255)"/><rect x="9.4" y="118.8" width="10.9" height="10.9" fill="rgb(168,225,255)"/><rect x="19.3" y="118.8" width="10.9" height="10.9" fill="rgb(175,227,255)"/><rect x="29.2" y="118.8" width="10.9" height="10.9" fill="rgb(183,228,255)"/><rect x="39.0" y="118.8" width="10.9" height="10.9" fill="rgb(191,229,255)"/><rect x="48.9" y="118.8" width="10.9" height="10.9" fill="rgb(198,230,255)"/><rect x="58.8" y="118.8" width="10.9" height="10.9" fill="rgb(206,232,255)"/><rect x="68.7" y="118.8" width="10.9" height="10.9" fill="rgb(213,232,255)"/><rect x="78.6" y="118.8" width="10.9" height="10.9" fill="rgb(219,232,255)"/><rect x="88.5" y="118.8" width="10.9" height="10.9" fill="rgb(226,232,255)"/><rect x="98.3" y="118.8" width="10.9" height="10.9" fill="rgb(232,232,255)"/><rect x="108.2" y="118.8" width="10.9" height="10.9" fill="rgb(238,232,255)"/><rect x="118.1" y="118.8" width="10.9" height="10.9" fill="rgb(245,232,255)"/><rect x="128.0" y="118.8" width="10.9" height="10.9" fill="rgb(249,230,253)"/><rect x="137.9" y="118.8" width="10.9" height="10.9" fill="rgb(250,226,248)"/><rect x="147.8" y="118.8" width="10.9" height="10.9" fill="rgb(251,222,243)"/><rect x="157.7" y="118.8" width="10.9" height="10.9" fill="rgb(252,219,238)"/><rect x="167.5" y="118.8" width="10.9" height="10.9" fill="rgb(253,215,233)"/><rect x="177.4" y="118.8" width="10.9" height="10.9" fill="rgb(254,211,228)"/><rect x="187.3" y="118.8" width="10.9" height="10.9" fill="rgb(255,206,222)"/><rect x="197.2" y="118.8" width="10.9" height="10.9" fill="rgb(255,200,216)"/><rect x="207.1" y="118.8" width="10.9" height="10.9" fill="rgb(255,194,210)"/><rect x="217.0" y="118.8" width="10.9" height="10.9" fill="rgb(255,187,203)"/><rect x="226.8" y="118.8" width="10.9" height="10.9" fill="rgb(255,181,197)"/><rect x="236.7" y="118.8" width="10.9" height="10.9" fill="rgb(255,174,190)"/><rect x="246.6" y="118.8" width="10.9" height="10.9" fill="rgb(255,168,184)"/><rect x="256.5" y="118.8" width="10.9" height="10.9" fill="rgb(255,168,184)"/><rect x="266.4" y="118.8" width="10.9" height="10.9" fill="rgb(255,168,184)"/><rect x="-20.3" y="128.7" width="10.9" height="10.9" fill="rgb(164,216,255)"/><rect x="-10.4" y="128.7" width="10.9" height="10.9" fill="rgb(164,216,255)"/><rect x="-0.5" y="128.7" width="10.9" height="10.9" fill="rgb(164,216,255)"/><rect x="9.4" y="128.7" width="10.9" height="10.9" fill="rgb(171,217,255)"/><rect x="19.3" y="128.7" width="10.9" height="10.9" fill="rgb(178,219,255)"/><rect x="29.2" y="128.7" width="10.9" height="10.9" fill="rgb(185,220,255)"/><rect x="39.0" y="128.7" width="10.9" height="10.9" fill="rgb(192,221,255)"/><rect x="48.9" y="128.7" width="10.9" height="10.9" fill="rgb(199,222,255)"/><rect x="58.8" y="128.7" width="10.9" height="10.9" fill="rgb(206,224,255)"/><rect x="68.7" y="128.7" width="10.9" height="10.9" fill="rgb(213,224,255)"/><rect x="78.6" y="128.7" width="10.9" height="10.9" fill="rgb(220,224,255)"/><rect x="88.5" y="128.7" width="10.9" height="10.9" fill="rgb(226,224,255)"/><rect x="98.3" y="128.7" width="10.9" height="10.9" fill="rgb(233,224,255)"/><rect x="108.2" y="128.7" width="10.9" height="10.9" fill="rgb(240,224,255)"/><rect x="118.1" y="128.7" width="10.9" height="10.9" fill="rgb(246,224,255)"/><rect x="128.0" y="128.7" width="10.9" height="10.9" fill="rgb(250,222,252)"/><rect x="137.9" y="128.7" width="10.9" height="10.9" fill="rgb(251,218,247)"/><rect x="147.8" y="128.7" width="10.9" height="10.9" fill="rgb(252,214,242)"/><rect x="157.7" y="128.7" width="10.9" height="10.9" fill="rgb(253,211,237)"/><rect x="167.5" y="128.7" width="10.9" height="10.9" fill="rgb(254,207,231)"/><rect x="177.4" y="128.7" width="10.9" height="10.9" fill="rgb(254,203,226)"/><rect x="187.3" y="128.7" width="10.9" height="10.9" fill="rgb(255,198,220)"/><rect x="197.2" y="128.7" width="10.9" height="10.9" fill="rgb(255,192,214)"/><rect x="207.1" y="128.7" width="10.9" height="10.9" fill="rgb(255,186,208)"/><rect x="217.0" y="128.7" width="10.9" height="10.9" fill="rgb(255,180,202)"/><rect x="226.8" y="128.7" width="10.9" height="10.9" fill="rgb(255,174,196)"/><rect x="236.7" y="128.7" width="10.9" height="10.9" fill="rgb(255,168,190)"/><rect x="246.6" y="128.7" width="10.9" height="10.9" fill="rgb(255,162,184)"/><rect x="256.5" y="128.7" width="10.9" height="10.9" fill="rgb(255,162,184)"/><rect x="266.4" y="128.7" width="10.9" height="10.9" fill="rgb(255,162,184)"/><rect x="-20.3" y="138.7" width="10.9" height="10.9" fill="rgb(168,208,255)"/><rect x="-10.4" y="138.7" width="10.9" height="10.9" fill="rgb(168,208,255)"/><rect x="-0.5" y="138.7" width="10.9" height="10.9" fill="rgb(168,208,255)"/><rect x="9.4" y="138.7" width="10.9" height="10.9" fill="rgb(174,209,255)"/><rect x="19.3" y="138.7" width="10.9" height="10.9" fill="rgb(181,211,255)"/><rect x="29.2" y="138.7" width="10.9" height="10.9" fill="rgb(187,212,255)"/><rect x="39.0" y="138.7" width="10.9" height="10.9" fill="rgb(194,213,255)"/><rect x="48.9" y="138.7" width="10.9" height="10.9" fill="rgb(200,214,255)"/><rect x="58.8" y="138.7" width="10.9" height="10.9" fill="rgb(206,216,255)"/><rect x="68.7" y="138.7" width="10.9" height="10.9" fill="rgb(213,216,255)"/><rect x="78.6" y="138.7" width="10.9" height="10.9" fill="rgb(220,216,255)"/><rect x="88.5" y="138.7" width="10.9" height="10.9" fill="rgb(227,216,255)"/><rect x="98.3" y="138.7" width="10.9" height="10.9" fill="rgb(234,216,255)"/><rect x="108.2" y="138.7" width="10.9" height="10.9" fill="rgb(241,216,255)"/><rect x="118.1" y="138.7" width="10.9" height="10.9" fill="rgb(248,216,255)"/><rect x="128.0" y="138.7" width="10.9" height="10.9" fill="rgb(252,214,252)"/><rect x="137.9" y="138.7" width="10.9" height="10.9" fill="rgb(252,210,247)"/><rect x="147.8" y="138.7" width="10.9" height="10.9" fill="rgb(253,206,241)"/><rect x="157.7" y="138.7" width="10.9" height="10.9" fill="rgb(253,203,235)"/><rect x="167.5" y="138.7" width="10.9" height="10.9" fill="rgb(254,199,230)"/><rect x="177.4" y="138.7" width="10.9" height="10.9" fill="rgb(255,195,224)"/><rect x="187.3" y="138.7" width="10.9" height="10.9" fill="rgb(255,191,219)"/><rect x="197.2" y="138.7" width="10.9" height="10.9" fill="rgb(255,185,213)"/><rect x="207.1" y="138.7" width="10.9" height="10.9" fill="rgb(255,179,207)"/><rect x="217.0" y="138.7" width="10.9" height="10.9" fill="rgb(255,173,201)"/><rect x="226.8" y="138.7" width="10.9" height="10.9" fill="rgb(255,168,196)"/><rect x="236.7" y="138.7" width="10.9" height="10.9" fill="rgb(255,162,190)"/><rect x="246.6" y="138.7" width="10.9" height="10.9" fill="rgb(255,156,184)"/><rect x="256.5" y="138.7" width="10.9" height="10.9" fill="rgb(255,156,184)"/><rect x="266.4" y="138.7" width="10.9" height="10.9" fill="rgb(255,156,184)"/><rect x="-20.3" y="148.6" width="10.9" height="10.9" fill="rgb(172,200,255)"/><rect x="-10.4" y="148.6" width="10.9" height="10.9" fill="rgb(172,200,255)"/><rect x="-0.5" y="148.6" width="10.9" height="10.9" fill="rgb(172,200,255)"/><rect x="9.4" y="148.6" width="10.9" height="10.9" fill="rgb(178,201,255)"/><rect x="19.3" y="148.6" width="10.9" height="10.9" fill="rgb(184,203,255)"/><rect x="29.2" y="148.6" width="10.9" height="10.9" fill="rgb(189,204,255)"/><rect x="39.0" y="148.6" width="10.9" height="10.9" fill="rgb(195,205,255)"/><rect x="48.9" y="148.6" width="10.9" height="10.9" fill="rgb(201,206,255)"/><rect x="58.8" y="148.6" width="10.9" height="10.9" fill="rgb(207,208,255)"/><rect x="68.7" y="148.6" width="10.9" height="10.9" fill="rgb(213,208,255)"/><rect x="78.6" y="148.6" width="10.9" height="10.9" fill="rgb(221,208,255)"/><rect x="88.5" y="148.6" width="10.9" height="10.9" fill="rgb(228,208,255)"/><rect x="98.3" y="148.6" width="10.9" height="10.9" fill="rgb(235,208,255)"/><rect x="108.2" y="148.6" width="10.9" height="10.9" fill="rgb(242,208,255)"/><rect x="118.1" y="148.6" width="10.9" height="10.9" fill="rgb(250,208,255)"/><rect x="128.0" y="148.6" width="10.9" height="10.9" fill="rgb(253,206,252)"/><rect x="137.9" y="148.6" width="10.9" height="10.9" fill="rgb(254,202,246)"/><rect x="147.8" y="148.6" width="10.9" height="10.9" fill="rgb(254,198,240)"/><rect x="157.7" y="148.6" width="10.9" height="10.9" fill="rgb(254,195,234)"/><rect x="167.5" y="148.6" width="10.9" height="10.9" fill="rgb(255,191,228)"/><rect x="177.4" y="148.6" width="10.9" height="10.9" fill="rgb(255,187,222)"/><rect x="187.3" y="148.6" width="10.9" height="10.9" fill="rgb(255,183,217)"/><rect x="197.2" y="148.6" width="10.9" height="10.9" fill="rgb(255,177,211)"/><rect x="207.1" y="148.6" width="10.9" height="10.9" fill="rgb(255,172,206)"/><rect x="217.0" y="148.6" width="10.9" height="10.9" fill="rgb(255,166,200)"/><rect x="226.8" y="148.6" width="10.9" height="10.9" fill="rgb(255,161,195)"/><rect x="236.7" y="148.6" width="10.9" height="10.9" fill="rgb(255,155,189)"/><rect x="246.6" y="148.6" width="10.9" height="10.9" fill="rgb(255,150,184)"/><rect x="256.5" y="148.6" width="10.9" height="10.9" fill="rgb(255,150,184)"/><rect x="266.4" y="148.6" width="10.9" height="10.9" fill="rgb(255,150,184)"/><rect x="-20.3" y="158.6" width="10.9" height="10.9" fill="rgb(176,192,255)"/><rect x="-10.4" y="158.6" width="10.9" height="10.9" fill="rgb(176,192,255)"/><rect x="-0.5" y="158.6" width="10.9" height="10.9" fill="rgb(176,192,255)"/><rect x="9.4" y="158.6" width="10.9" height="10.9" fill="rgb(181,193,255)"/><rect x="19.3" y="158.6" width="10.9" height="10.9" fill="rgb(186,195,255)"/><rect x="29.2" y="158.6" width="10.9" height="10.9" fill="rgb(191,196,255)"/><rect x="39.0" y="158.6" width="10.9" height="10.9" fill="rgb(196,197,255)"/><rect x="48.9" y="158.6" width="10.9" height="10.9" fill="rgb(202,198,255)"/><rect x="58.8" y="158.6" width="10.9" height="10.9" fill="rgb(207,200,255)"/><rect x="68.7" y="158.6" width="10.9" height="10.9" fill="rgb(214,200,255)"/><rect x="78.6" y="158.6" width="10.9" height="10.9" fill="rgb(221,200,255)"/><rect x="88.5" y="158.6" width="10.9" height="10.9" fill="rgb(229,200,255)"/><rect x="98.3" y="158.6" width="10.9" height="10.9" fill="rgb(236,200,255)"/><rect x="108.2" y="158.6" width="10.9" height="10.9" fill="rgb(244,200,255)"/><rect x="118.1" y="158.6" width="10.9" height="10.9" fill="rgb(251,200,255)"/><rect x="128.0" y="158.6" width="10.9" height="10.9" fill="rgb(255,198,252)"/><rect x="137.9" y="158.6" width="10.9" height="10.9" fill="rgb(255,194,246)"/><rect x="147.8" y="158.6" width="10.9" height="10.9" fill="rgb(255,190,239)"/><rect x="157.7" y="158.6" width="10.9" height="10.9" fill="rgb(255,187,233)"/><rect x="167.5" y="158.6" width="10.9" height="10.9" fill="rgb(255,183,227)"/><rect x="177.4" y="158.6" width="10.9" height="10.9" fill="rgb(255,179,221)"/><rect x="187.3" y="158.6" width="10.9" height="10.9" fill="rgb(255,175,215)"/><rect x="197.2" y="158.6" width="10.9" height="10.9" fill="rgb(255,170,210)"/><rect x="207.1" y="158.6" width="10.9" height="10.9" fill="rgb(255,164,204)"/><rect x="217.0" y="158.6" width="10.9" height="10.9" fill="rgb(255,159,199)"/><rect x="226.8" y="158.6" width="10.9" height="10.9" fill="rgb(255,154,194)"/><rect x="236.7" y="158.6" width="10.9" height="10.9" fill="rgb(255,149,189)"/><rect x="246.6" y="158.6" width="10.9" height="10.9" fill="rgb(255,144,184)"/><rect x="256.5" y="158.6" width="10.9" height="10.9" fill="rgb(255,144,184)"/><rect x="266.4" y="158.6" width="10.9" height="10.9" fill="rgb(255,144,184)"/><rect x="-20.3" y="168.5" width="10.9" height="10.9" fill="rgb(176,192,255)"/><rect x="-10.4" y="168.5" width="10.9" height="10.9" fill="rgb(176,192,255)"/><rect x="-0.5" y="168.5" width="10.9" height="10.9" fill="rgb(176,192,255)"/><rect x="9.4" y="168.5" width="10.9" height="10.9" fill="rgb(181,193,255)"/><rect x="19.3" y="168.5" width="10.9" height="10.9" fill="rgb(186,195,255)"/><rect x="29.2" y="168.5" width="10.9" height="10.9" fill="rgb(191,196,255)"/><rect x="39.0" y="168.5" width="10.9" height="10.9" fill="rgb(196,197,255)"/><rect x="48.9" y="168.5" width="10.9" height="10.9" fill="rgb(202,198,255)"/><rect x="58.8" y="168.5" width="10.9" height="10.9" fill="rgb(207,200,255)"/><rect x="68.7" y="168.5" width="10.9" height="10.9" fill="rgb(214,200,255)"/><rect x="78.6" y="168.5" width="10.9" height="10.9" fill="rgb(221,200,255)"/><rect x="88.5" y="168.5" width="10.9" height="10.9" fill="rgb(229,200,255)"/><rect x="98.3" y="168.5" width="10.9" height="10.9" fill="rgb(236,200,255)"/><rect x="108.2" y="168.5" width="10.9" height="10.9" fill="rgb(244,200,255)"/><rect x="118.1" y="168.5" width="10.9" height="10.9" fill="rgb(251,200,255)"/><rect x="128.0" y="168.5" width="10.9" height="10.9" fill="rgb(255,198,252)"/><rect x="137.9" y="168.5" width="10.9" height="10.9" fill="rgb(255,194,246)"/><rect x="147.8" y="168.5" width="10.9" height="10.9" fill="rgb(255,190,239)"/><rect x="157.7" y="168.5" width="10.9" height="10.9" fill="rgb(255,187,233)"/><rect x="167.5" y="168.5" width="10.9" height="10.9" fill="rgb(255,183,227)"/><rect x="177.4" y="168.5" width="10.9" height="10.9" fill="rgb(255,179,221)"/><rect x="187.3" y="168.5" width="10.9" height="10.9" fill="rgb(255,175,215)"/><rect x="197.2" y="168.5" width="10.9" height="10.9" fill="rgb(255,170,210)"/><rect x="207.1" y="168.5" width="10.9" height="10.9" fill="rgb(255,164,204)"/><rect x="217.0" y="168.5" width="10.9" height="10.9" fill="rgb(255,159,199)"/><rect x="226.8" y="168.5" width="10.9" height="10.9" fill="rgb(255,154,194)"/><rect x="236.7" y="168.5" width="10.9" height="10.9" fill="rgb(255,149,189)"/><rect x="246.6" y="168.5" width="10.9" height="10.9" fill="rgb(255,144,184)"/><rect x="256.5" y="168.5" width="10.9" height="10.9" fill="rgb(255,144,184)"/><rect x="266.4" y="168.5" width="10.9" height="10.9" fill="rgb(255,144,184)"/><rect x="-20.3" y="178.4" width="10.9" height="10.9" fill="rgb(176,192,255)"/><rect x="-10.4" y="178.4" width="10.9" height="10.9" fill="rgb(176,192,255)"/><rect x="-0.5" y="178.4" width="10.9" height="10.9" fill="rgb(176,192,255)"/><rect x="9.4" y="178.4" width="10.9" height="10.9" fill="rgb(181,193,255)"/><rect x="19.3" y="178.4" width="10.9" height="10.9" fill="rgb(186,195,255)"/><rect x="29.2" y="178.4" width="10.9" height="10.9" fill="rgb(191,196,255)"/><rect x="39.0" y="178.4" width="10.9" height="10.9" fill="rgb(196,197,255)"/><rect x="48.9" y="178.4" width="10.9" height="10.9" fill="rgb(202,198,255)"/><rect x="58.8" y="178.4" width="10.9" height="10.9" fill="rgb(207,200,255)"/><rect x="68.7" y="178.4" width="10.9" height="10.9" fill="rgb(214,200,255)"/><rect x="78.6" y="178.4" width="10.9" height="10.9" fill="rgb(221,200,255)"/><rect x="88.5" y="178.4" width="10.9" height="10.9" fill="rgb(229,200,255)"/><rect x="98.3" y="178.4" width="10.9" height="10.9" fill="rgb(236,200,255)"/><rect x="108.2" y="178.4" width="10.9" height="10.9" fill="rgb(244,200,255)"/><rect x="118.1" y="178.4" width="10.9" height="10.9" fill="rgb(251,200,255)"/><rect x="128.0" y="178.4" width="10.9" height="10.9" fill="rgb(255,198,252)"/><rect x="137.9" y="178.4" width="10.9" height="10.9" fill="rgb(255,194,246)"/><rect x="147.8" y="178.4" width="10.9" height="10.9" fill="rgb(255,190,239)"/><rect x="157.7" y="178.4" width="10.9" height="10.9" fill="rgb(255,187,233)"/><rect x="167.5" y="178.4" width="10.9" height="10.9" fill="rgb(255,183,227)"/><rect x="177.4" y="178.4" width="10.9" height="10.9" fill="rgb(255,179,221)"/><rect x="187.3" y="178.4" width="10.9" height="10.9" fill="rgb(255,175,215)"/><rect x="197.2" y="178.4" width="10.9" height="10.9" fill="rgb(255,170,210)"/><rect x="207.1" y="178.4" width="10.9" height="10.9" fill="rgb(255,164,204)"/><rect x="217.0" y="178.4" width="10.9" height="10.9" fill="rgb(255,159,199)"/><rect x="226.8" y="178.4" width="10.9" height="10.9" fill="rgb(255,154,194)"/><rect x="236.7" y="178.4" width="10.9" height="10.9" fill="rgb(255,149,189)"/><rect x="246.6" y="178.4" width="10.9" height="10.9" fill="rgb(255,144,184)"/><rect x="256.5" y="178.4" width="10.9" height="10.9" fill="rgb(255,144,184)"/><rect x="266.4" y="178.4" width="10.9" height="10.9" fill="rgb(255,144,184)"/></g></svg></div>
<div class="a" style="left:544.5px;top:825.5px;width:257.0px;height:169.0px;border:1.6px solid #8a8a8a"></div>
<svg class="a" style="left:500px;top:800px" width="320" height="230" viewBox="500 800 320 230">
<clipPath id="cclip"><rect x="545.5" y="826.5" width="255" height="167"/></clipPath>
<line clip-path="url(#cclip)" x1="574" y1="997" x2="805" y2="851" stroke="#000" stroke-width="2.6"/>
<circle cx="658.6" cy="913" r="4.3" fill="#111"/>
<circle cx="676" cy="907.5" r="5" fill="#555" stroke="#222" stroke-width="1.2"/>
<rect x="666.5" y="902.5" width="14" height="13" fill="none" stroke="#000" stroke-width="1.8"/>
<circle cx="672.8" cy="909" r="4.5" fill="#fff" stroke="#444" stroke-width="1.5"/>
<line x1="556.10" y1="994.5" x2="556.10" y2="1000.5" stroke="#dcdcdc" stroke-width="1.4"/>
<line x1="607.45" y1="994.5" x2="607.45" y2="1000.5" stroke="#dcdcdc" stroke-width="1.4"/>
<line x1="658.80" y1="994.5" x2="658.80" y2="1000.5" stroke="#dcdcdc" stroke-width="1.4"/>
<line x1="710.15" y1="994.5" x2="710.15" y2="1000.5" stroke="#dcdcdc" stroke-width="1.4"/>
<line x1="761.50" y1="994.5" x2="761.50" y2="1000.5" stroke="#dcdcdc" stroke-width="1.4"/>
<line x1="538.5" y1="873.8" x2="544.5" y2="873.8" stroke="#dcdcdc" stroke-width="1.4"/>
<line x1="538.5" y1="941.8" x2="544.5" y2="941.8" stroke="#dcdcdc" stroke-width="1.4"/>
</svg>
<div class="t" style="left:541.96px;top:1004.19px;font-size:14.53px;color:#d0d0d0;">0.29</div>
<div class="t" style="left:597.35px;top:1004.19px;font-size:14.53px;color:#d0d0d0;">0.3</div>
<div class="t" style="left:644.66px;top:1004.19px;font-size:14.53px;color:#d0d0d0;">0.31</div>
<div class="t" style="left:696.01px;top:1004.19px;font-size:14.53px;color:#d0d0d0;">0.32</div>
<div class="t" style="left:747.36px;top:1004.19px;font-size:14.53px;color:#d0d0d0;">0.33</div>
<div class="t" style="left:509.73px;top:866.69px;font-size:14.53px;color:#d0d0d0;">0.34</div>
<div class="t" style="left:509.73px;top:934.69px;font-size:14.53px;color:#d0d0d0;">0.32</div>
<div class="a" style="left:813px;top:796px;width:11px;height:25.6px;background:#000000;"></div>
<div class="a" style="left:824px;top:796px;width:862px;height:13px;background:#2e2e2e;"></div>
<div class="a" style="left:824px;top:809px;width:862px;height:12.6px;background:#141414;"></div>
<div class="t" style="left:933.40px;top:803.19px;font-size:13.95px;color:#f2f2f2;">0</div>
<div class="t" style="left:1008.60px;top:803.19px;font-size:13.95px;color:#f2f2f2;">10</div>
<div class="t" style="left:1076.60px;top:803.19px;font-size:13.95px;color:#f2f2f2;">20</div>
<div class="t" style="left:1144.80px;top:803.19px;font-size:13.95px;color:#f2f2f2;">30</div>
<div class="t" style="left:1212.60px;top:803.19px;font-size:13.95px;color:#f2f2f2;">40</div>
<div class="t" style="left:1281.20px;top:803.19px;font-size:13.95px;color:#f2f2f2;">50</div>
<div class="t" style="left:1349.30px;top:803.19px;font-size:13.95px;color:#f2f2f2;">60</div>
<div class="t" style="left:1417.20px;top:803.19px;font-size:13.95px;color:#f2f2f2;">70</div>
<div class="t" style="left:1485.10px;top:803.19px;font-size:13.95px;color:#f2f2f2;">80</div>
<div class="t" style="left:1553.20px;top:803.19px;font-size:13.95px;color:#f2f2f2;">90</div>
<div class="t" style="left:1621.30px;top:803.19px;font-size:13.95px;color:#f2f2f2;">100</div>
<div class="a" style="left:813px;top:821.60px;width:11px;height:23.95px;background:#202020;"></div>
<div class="a" style="left:824px;top:821.60px;width:862px;height:23.95px;background:#434343;"></div>
<div class="t" style="left:827.20px;top:828.39px;font-size:13.95px;color:#f4f4f4;transform:scaleX(0.8316);">x: CIE31</div>
<div class="t" style="left:933.40px;top:828.39px;font-size:13.95px;color:#f4f4f4;transform:scaleX(0.8900);">0.2599</div>
<div class="t" style="left:1008.60px;top:828.39px;font-size:13.95px;color:#f4f4f4;transform:scaleX(0.8900);">0.3100</div>
<div class="t" style="left:1076.60px;top:828.39px;font-size:13.95px;color:#f4f4f4;transform:scaleX(0.8900);">0.3141</div>
<div class="t" style="left:1144.80px;top:828.39px;font-size:13.95px;color:#f4f4f4;transform:scaleX(0.8900);">0.3127</div>
<div class="t" style="left:1212.60px;top:828.39px;font-size:13.95px;color:#f4f4f4;transform:scaleX(0.8900);">0.3131</div>
<div class="t" style="left:1281.20px;top:828.39px;font-size:13.95px;color:#f4f4f4;transform:scaleX(0.8900);">0.3124</div>
<div class="t" style="left:1349.30px;top:828.39px;font-size:13.95px;color:#f4f4f4;transform:scaleX(0.8900);">0.3126</div>
<div class="t" style="left:1417.20px;top:828.39px;font-size:13.95px;color:#f4f4f4;transform:scaleX(0.8900);">0.3134</div>
<div class="t" style="left:1485.10px;top:828.39px;font-size:13.95px;color:#f4f4f4;transform:scaleX(0.8900);">0.3125</div>
<div class="t" style="left:1553.20px;top:828.39px;font-size:13.95px;color:#f4f4f4;transform:scaleX(0.8900);">0.3128</div>
<div class="t" style="left:1621.30px;top:828.39px;font-size:13.95px;color:#f4f4f4;transform:scaleX(0.8900);">0.3127</div>
<div class="a" style="left:813px;top:845.25px;width:11px;height:23.95px;background:#1a1a1a;"></div>
<div class="a" style="left:824px;top:845.25px;width:862px;height:23.95px;background:#7f7f7f;"></div>
<div class="t" style="left:827.20px;top:852.04px;font-size:13.95px;color:#f4f4f4;transform:scaleX(0.8409);">y: CIE31</div>
<div class="t" style="left:933.40px;top:852.04px;font-size:13.95px;color:#f4f4f4;transform:scaleX(0.8900);">0.2597</div>
<div class="t" style="left:1008.60px;top:852.04px;font-size:13.95px;color:#f4f4f4;transform:scaleX(0.8900);">0.3278</div>
<div class="t" style="left:1076.60px;top:852.04px;font-size:13.95px;color:#f4f4f4;transform:scaleX(0.8900);">0.3300</div>
<div class="t" style="left:1144.80px;top:852.04px;font-size:13.95px;color:#f4f4f4;transform:scaleX(0.8900);">0.3285</div>
<div class="t" style="left:1212.60px;top:852.04px;font-size:13.95px;color:#f4f4f4;transform:scaleX(0.8900);">0.3296</div>
<div class="t" style="left:1281.20px;top:852.04px;font-size:13.95px;color:#f4f4f4;transform:scaleX(0.8900);">0.3287</div>
<div class="t" style="left:1349.30px;top:852.04px;font-size:13.95px;color:#f4f4f4;transform:scaleX(0.8900);">0.3293</div>
<div class="t" style="left:1417.20px;top:852.04px;font-size:13.95px;color:#f4f4f4;transform:scaleX(0.8900);">0.3294</div>
<div class="t" style="left:1485.10px;top:852.04px;font-size:13.95px;color:#f4f4f4;transform:scaleX(0.8900);">0.3288</div>
<div class="t" style="left:1553.20px;top:852.04px;font-size:13.95px;color:#f4f4f4;transform:scaleX(0.8900);">0.3297</div>
<div class="t" style="left:1621.30px;top:852.04px;font-size:13.95px;color:#f4f4f4;transform:scaleX(0.8900);">0.3292</div>
<div class="a" style="left:813px;top:868.90px;width:11px;height:23.95px;background:#202020;"></div>
<div class="a" style="left:824px;top:868.90px;width:862px;height:23.95px;background:#434343;"></div>
<div class="t" style="left:827.20px;top:875.69px;font-size:13.95px;color:#f4f4f4;transform:scaleX(0.7544);">Y</div>
<div class="t" style="left:933.40px;top:875.69px;font-size:13.95px;color:#f4f4f4;transform:scaleX(0.8900);">0.1771</div>
<div class="t" style="left:1008.60px;top:875.69px;font-size:13.95px;color:#f4f4f4;transform:scaleX(0.8900);">1.5494</div>
<div class="t" style="left:1076.60px;top:875.69px;font-size:13.95px;color:#f4f4f4;transform:scaleX(0.8900);">6.3641</div>
<div class="t" style="left:1144.80px;top:875.69px;font-size:13.95px;color:#f4f4f4;transform:scaleX(0.8961);">13.8612</div>
<div class="t" style="left:1212.60px;top:875.69px;font-size:13.95px;color:#f4f4f4;transform:scaleX(0.8961);">27.0930</div>
<div class="t" style="left:1281.20px;top:875.69px;font-size:13.95px;color:#f4f4f4;transform:scaleX(0.8961);">44.9043</div>
<div class="t" style="left:1349.30px;top:875.69px;font-size:13.95px;color:#f4f4f4;transform:scaleX(0.8961);">65.4790</div>
<div class="t" style="left:1417.20px;top:875.69px;font-size:13.95px;color:#f4f4f4;transform:scaleX(0.8961);">91.7155</div>
<div class="t" style="left:1485.10px;top:875.69px;font-size:13.95px;color:#f4f4f4;transform:scaleX(0.9006);">124.4009</div>
<div class="t" style="left:1553.20px;top:875.69px;font-size:13.95px;color:#f4f4f4;transform:scaleX(0.9006);">162.2579</div>
<div class="t" style="left:1621.30px;top:875.69px;font-size:13.95px;color:#f4f4f4;transform:scaleX(0.9006);">204.4446</div>
<div class="a" style="left:813px;top:892.55px;width:11px;height:23.95px;background:#1a1a1a;"></div>
<div class="a" style="left:824px;top:892.55px;width:862px;height:23.95px;background:#7f7f7f;"></div>
<div class="t" style="left:827.20px;top:899.34px;font-size:13.95px;color:#f4f4f4;transform:scaleX(0.8821);">Target Y</div>
<div class="t" style="left:933.40px;top:899.34px;font-size:13.95px;color:#f4f4f4;transform:scaleX(0.8900);">0.0000</div>
<div class="t" style="left:1008.60px;top:899.34px;font-size:13.95px;color:#f4f4f4;transform:scaleX(0.9359);">2.1119</div>
<div class="t" style="left:1076.60px;top:899.34px;font-size:13.95px;color:#f4f4f4;transform:scaleX(0.8900);">6.7681</div>
<div class="t" style="left:1144.80px;top:899.34px;font-size:13.95px;color:#f4f4f4;transform:scaleX(0.8961);">14.7756</div>
<div class="t" style="left:1212.60px;top:899.34px;font-size:13.95px;color:#f4f4f4;transform:scaleX(0.8961);">27.1642</div>
<div class="t" style="left:1281.20px;top:899.34px;font-size:13.95px;color:#f4f4f4;transform:scaleX(0.8961);">44.1315</div>
<div class="t" style="left:1349.30px;top:899.34px;font-size:13.95px;color:#f4f4f4;transform:scaleX(0.8961);">65.1252</div>
<div class="t" style="left:1417.20px;top:899.34px;font-size:13.95px;color:#f4f4f4;transform:scaleX(0.8961);">91.0190</div>
<div class="t" style="left:1485.10px;top:899.34px;font-size:13.95px;color:#f4f4f4;transform:scaleX(0.9006);">123.4492</div>
<div class="t" style="left:1553.20px;top:899.34px;font-size:13.95px;color:#f4f4f4;transform:scaleX(0.9006);">161.7766</div>
<div class="t" style="left:1621.30px;top:899.34px;font-size:13.95px;color:#f4f4f4;transform:scaleX(0.9006);">204.4446</div>
<div class="a" style="left:813px;top:916.20px;width:11px;height:23.95px;background:#202020;"></div>
<div class="a" style="left:824px;top:916.20px;width:862px;height:23.95px;background:#434343;"></div>
<div class="t" style="left:827.20px;top:922.99px;font-size:13.95px;color:#f4f4f4;transform:scaleX(0.9427);">Gamma Log/Log</div>
<div class="t" style="left:933.40px;top:922.99px;font-size:13.95px;color:#f4f4f4;transform:scaleX(0.8900);">1.2778</div>
<div class="t" style="left:1008.60px;top:922.99px;font-size:13.95px;color:#f4f4f4;transform:scaleX(0.8900);">2.1384</div>
<div class="t" style="left:1076.60px;top:922.99px;font-size:13.95px;color:#f4f4f4;transform:scaleX(0.8900);">2.1558</div>
<div class="t" style="left:1144.80px;top:922.99px;font-size:13.95px;color:#f4f4f4;transform:scaleX(0.8900);">2.2232</div>
<div class="t" style="left:1212.60px;top:922.99px;font-size:13.95px;color:#f4f4f4;transform:scaleX(0.8900);">2.2057</div>
<div class="t" style="left:1281.20px;top:922.99px;font-size:13.95px;color:#f4f4f4;transform:scaleX(0.8900);">2.1992</div>
<div class="t" style="left:1349.30px;top:922.99px;font-size:13.95px;color:#f4f4f4;transform:scaleX(0.8900);">2.2289</div>
<div class="t" style="left:1417.20px;top:922.99px;font-size:13.95px;color:#f4f4f4;transform:scaleX(0.8900);">2.2299</div>
<div class="t" style="left:1485.10px;top:922.99px;font-size:13.95px;color:#f4f4f4;transform:scaleX(0.8900);">2.2263</div>
<div class="t" style="left:1553.20px;top:922.99px;font-size:13.95px;color:#f4f4f4;transform:scaleX(0.8900);">2.2398</div>
<div class="t" style="left:1621.30px;top:922.99px;font-size:13.95px;color:#f4f4f4;transform:scaleX(0.8900);">2.2749</div>
<div class="a" style="left:813px;top:939.85px;width:11px;height:23.95px;background:#1a1a1a;"></div>
<div class="a" style="left:824px;top:939.85px;width:862px;height:23.95px;background:#7f7f7f;"></div>
<div class="t" style="left:827.20px;top:946.64px;font-size:13.95px;color:#f4f4f4;transform:scaleX(0.7777);">CCT</div>
<div class="t" style="left:933.40px;top:946.64px;font-size:13.95px;color:#f4f4f4;transform:scaleX(0.9058);">16009.0000</div>
<div class="t" style="left:1008.60px;top:946.64px;font-size:13.95px;color:#f4f4f4;transform:scaleX(0.9040);">6663.0000</div>
<div class="t" style="left:1076.60px;top:946.64px;font-size:13.95px;color:#f4f4f4;transform:scaleX(0.9040);">6420.0000</div>
<div class="t" style="left:1144.80px;top:946.64px;font-size:13.95px;color:#f4f4f4;transform:scaleX(0.9040);">6507.0000</div>
<div class="t" style="left:1212.60px;top:946.64px;font-size:13.95px;color:#f4f4f4;transform:scaleX(0.9040);">6479.0000</div>
<div class="t" style="left:1281.20px;top:946.64px;font-size:13.95px;color:#f4f4f4;transform:scaleX(0.9040);">6522.0000</div>
<div class="t" style="left:1349.30px;top:946.64px;font-size:13.95px;color:#f4f4f4;transform:scaleX(0.9040);">6508.0000</div>
<div class="t" style="left:1417.20px;top:946.64px;font-size:13.95px;color:#f4f4f4;transform:scaleX(0.9040);">6463.0000</div>
<div class="t" style="left:1485.10px;top:946.64px;font-size:13.95px;color:#f4f4f4;transform:scaleX(0.9040);">6514.0000</div>
<div class="t" style="left:1553.20px;top:946.64px;font-size:13.95px;color:#f4f4f4;transform:scaleX(0.9040);">6493.0000</div>
<div class="t" style="left:1621.30px;top:946.64px;font-size:13.95px;color:#f4f4f4;transform:scaleX(0.9040);">6502.0000</div>
<div class="a" style="left:813px;top:963.50px;width:11px;height:23.95px;background:#202020;"></div>
<div class="a" style="left:824px;top:963.50px;width:862px;height:23.95px;background:#434343;"></div>
<div class="t" style="left:827.20px;top:970.29px;font-size:13.95px;color:#f4f4f4;transform:scaleX(0.8865);">ΔE 2000</div>
<div class="t" style="left:933.40px;top:970.29px;font-size:13.95px;color:#f4f4f4;transform:scaleX(0.8900);">1.0587</div>
<div class="t" style="left:1008.60px;top:970.29px;font-size:13.95px;color:#f4f4f4;transform:scaleX(0.8900);">1.5131</div>
<div class="t" style="left:1076.60px;top:970.29px;font-size:13.95px;color:#f4f4f4;transform:scaleX(0.8900);">0.5771</div>
<div class="t" style="left:1144.80px;top:970.29px;font-size:13.95px;color:#f4f4f4;transform:scaleX(0.8900);">0.8265</div>
<div class="t" style="left:1212.60px;top:970.29px;font-size:13.95px;color:#f4f4f4;transform:scaleX(0.8900);">0.1694</div>
<div class="t" style="left:1281.20px;top:970.29px;font-size:13.95px;color:#f4f4f4;transform:scaleX(0.8900);">0.4024</div>
<div class="t" style="left:1349.30px;top:970.29px;font-size:13.95px;color:#f4f4f4;transform:scaleX(0.8900);">0.2799</div>
<div class="t" style="left:1417.20px;top:970.29px;font-size:13.95px;color:#f4f4f4;transform:scaleX(0.9123);">0.3311</div>
<div class="t" style="left:1485.10px;top:970.29px;font-size:13.95px;color:#f4f4f4;transform:scaleX(0.8900);">0.2027</div>
<div class="t" style="left:1553.20px;top:970.29px;font-size:13.95px;color:#f4f4f4;transform:scaleX(0.8900);">0.4859</div>
<div class="t" style="left:1621.30px;top:970.29px;font-size:13.95px;color:#f4f4f4;transform:scaleX(0.8900);">0.1376</div>
<div class="a" style="left:813px;top:987.15px;width:11px;height:23.95px;background:#1a1a1a;"></div>
<div class="a" style="left:824px;top:987.15px;width:862px;height:23.95px;background:#7f7f7f;"></div>
<div class="t" style="left:827.20px;top:993.94px;font-size:13.95px;color:#f4f4f4;transform:scaleX(0.8249);">dEITP</div>
<div class="t" style="left:933.40px;top:993.94px;font-size:13.95px;color:#f4f4f4;transform:scaleX(0.8961);">58.3001</div>
<div class="t" style="left:1008.60px;top:993.94px;font-size:13.95px;color:#f4f4f4;transform:scaleX(0.8961);">13.0138</div>
<div class="t" style="left:1076.60px;top:993.94px;font-size:13.95px;color:#f4f4f4;transform:scaleX(0.8900);">3.3317</div>
<div class="t" style="left:1144.80px;top:993.94px;font-size:13.95px;color:#f4f4f4;transform:scaleX(0.8900);">3.8040</div>
<div class="t" style="left:1212.60px;top:993.94px;font-size:13.95px;color:#f4f4f4;transform:scaleX(0.8900);">0.2816</div>
<div class="t" style="left:1281.20px;top:993.94px;font-size:13.95px;color:#f4f4f4;transform:scaleX(0.8900);">1.1895</div>
<div class="t" style="left:1349.30px;top:993.94px;font-size:13.95px;color:#f4f4f4;transform:scaleX(0.8900);">0.4206</div>
<div class="t" style="left:1417.20px;top:993.94px;font-size:13.95px;color:#f4f4f4;transform:scaleX(0.8900);">0.6690</div>
<div class="t" style="left:1485.10px;top:993.94px;font-size:13.95px;color:#f4f4f4;transform:scaleX(0.8900);">0.5764</div>
<div class="t" style="left:1553.20px;top:993.94px;font-size:13.95px;color:#f4f4f4;transform:scaleX(0.8900);">0.3538</div>
<div class="t" style="left:1621.30px;top:993.94px;font-size:13.95px;color:#f4f4f4;transform:scaleX(0.8900);">0.0761</div>
<div class="a" style="left:173.70px;top:1146px;width:127.4px;height:52px;border-radius:5px;background:linear-gradient(#a6a6a6 0,#8a8a8a 8%,#7a7a7a 60%,#5c5c5c 100%)"></div>
<div class="a" style="left:178.10px;top:1150px;width:119px;height:31px;border-radius:4px;background:#000000"></div>
<div class="t" style="left:234.38px;top:1186.59px;font-size:10.17px;color:#333333;font-weight:bold;">0</div>
<div class="a" style="left:302.95px;top:1146px;width:127.4px;height:52px;border-radius:5px;background:linear-gradient(#a6a6a6 0,#8a8a8a 8%,#7a7a7a 60%,#5c5c5c 100%)"></div>
<div class="a" style="left:307.35px;top:1150px;width:119px;height:31px;border-radius:4px;background:#1c1c1c"></div>
<div class="t" style="left:360.80px;top:1186.59px;font-size:10.17px;color:#333333;font-weight:bold;">10</div>
<div class="a" style="left:432.20px;top:1146px;width:127.4px;height:52px;border-radius:5px;background:linear-gradient(#a6a6a6 0,#8a8a8a 8%,#7a7a7a 60%,#5c5c5c 100%)"></div>
<div class="a" style="left:436.60px;top:1150px;width:119px;height:31px;border-radius:4px;background:#343434"></div>
<div class="t" style="left:490.05px;top:1186.59px;font-size:10.17px;color:#333333;font-weight:bold;">20</div>
<div class="a" style="left:561.45px;top:1146px;width:127.4px;height:52px;border-radius:5px;background:linear-gradient(#a6a6a6 0,#8a8a8a 8%,#7a7a7a 60%,#5c5c5c 100%)"></div>
<div class="a" style="left:565.85px;top:1150px;width:119px;height:31px;border-radius:4px;background:#4d4d4d"></div>
<div class="t" style="left:619.30px;top:1186.59px;font-size:10.17px;color:#333333;font-weight:bold;">30</div>
<div class="a" style="left:690.70px;top:1146px;width:127.4px;height:52px;border-radius:5px;background:linear-gradient(#a6a6a6 0,#8a8a8a 8%,#7a7a7a 60%,#5c5c5c 100%)"></div>
<div class="a" style="left:695.10px;top:1150px;width:119px;height:31px;border-radius:4px;background:#676767"></div>
<div class="t" style="left:748.55px;top:1186.59px;font-size:10.17px;color:#333333;font-weight:bold;">40</div>
<div class="a" style="left:819.95px;top:1146px;width:127.4px;height:52px;border-radius:5px;background:linear-gradient(#a6a6a6 0,#8a8a8a 8%,#7a7a7a 60%,#5c5c5c 100%)"></div>
<div class="a" style="left:824.35px;top:1150px;width:119px;height:31px;border-radius:4px;background:#808080"></div>
<div class="t" style="left:877.80px;top:1186.59px;font-size:10.17px;color:#333333;font-weight:bold;">50</div>
<div class="a" style="left:949.20px;top:1146px;width:127.4px;height:52px;border-radius:5px;background:linear-gradient(#a6a6a6 0,#8a8a8a 8%,#7a7a7a 60%,#5c5c5c 100%)"></div>
<div class="a" style="left:953.60px;top:1150px;width:119px;height:31px;border-radius:4px;background:#9a9a9a"></div>
<div class="t" style="left:1007.05px;top:1186.59px;font-size:10.17px;color:#333333;font-weight:bold;">60</div>
<div class="a" style="left:1078.45px;top:1146px;width:127.4px;height:52px;border-radius:5px;background:linear-gradient(#a6a6a6 0,#8a8a8a 8%,#7a7a7a 60%,#5c5c5c 100%)"></div>
<div class="a" style="left:1082.85px;top:1150px;width:119px;height:31px;border-radius:4px;background:#b3b3b3"></div>
<div class="t" style="left:1136.30px;top:1186.59px;font-size:10.17px;color:#333333;font-weight:bold;">70</div>
<div class="a" style="left:1207.70px;top:1146px;width:127.4px;height:52px;border-radius:5px;background:linear-gradient(#a6a6a6 0,#8a8a8a 8%,#7a7a7a 60%,#5c5c5c 100%)"></div>
<div class="a" style="left:1212.10px;top:1150px;width:119px;height:31px;border-radius:4px;background:#cccccc"></div>
<div class="t" style="left:1265.55px;top:1186.59px;font-size:10.17px;color:#333333;font-weight:bold;">80</div>
<div class="a" style="left:1336.95px;top:1146px;width:127.4px;height:52px;border-radius:5px;background:linear-gradient(#a6a6a6 0,#8a8a8a 8%,#7a7a7a 60%,#5c5c5c 100%)"></div>
<div class="a" style="left:1341.35px;top:1150px;width:119px;height:31px;border-radius:4px;background:#e6e6e6"></div>
<div class="t" style="left:1394.80px;top:1186.59px;font-size:10.17px;color:#333333;font-weight:bold;">90</div>
<div class="a" style="left:1466.20px;top:1146px;width:127.4px;height:52px;border-radius:5px;background:linear-gradient(#1c1c1c 0,#242424 40%,#2c2c2c 100%)"></div>
<div class="a" style="left:1470.60px;top:1150px;width:119px;height:31px;border-radius:4px;background:#ffffff"></div>
<div class="t" style="left:1521.93px;top:1185.72px;font-size:9.30px;color:#ffffff;font-weight:bold;">100</div>
<div class="a" style="left:173px;top:1197.5px;width:1700px;height:1.5px;background:#2e2e2e;"></div>
<div class="a" style="left:173px;top:1199px;width:1700px;height:1px;background:#8a8a8a;"></div>
<div class="a" style="left:1596.5px;top:1161px;width:40px;height:37px;border-radius:4px;background:linear-gradient(#9a9a9a,#6a6a6a)"></div>
<div class="a" style="left:1604px;top:1167px;width:25px;height:26px;border-radius:4px;border:2.4px solid #2a2a2a;background:linear-gradient(#a0a0a0,#808080)"></div>
<div class="a" style="left:1611px;top:1175px;width:11px;height:11px;background:#000000;"></div>
<div class="a" style="left:1638.5px;top:1147px;width:195px;height:25px;background:linear-gradient(#8c8c8c,#6e6e6e);border-radius:3px 0 0 0"></div>
<div class="a" style="left:1678.4px;top:1147px;width:1.2px;height:25px;background:#4a4a4a;"></div>
<div class="a" style="left:1717.6px;top:1147px;width:1.2px;height:25px;background:#4a4a4a;"></div>
<div class="a" style="left:1755.6px;top:1147px;width:1.2px;height:25px;background:#4a4a4a;"></div>
<div class="a" style="left:1794.6px;top:1147px;width:1.2px;height:25px;background:#4a4a4a;"></div>
<div class="a" style="left:1833px;top:1147px;width:40px;height:25px;background:#2a2a2a"></div>
<div class="a" style="left:1649.5px;top:1151px;width:18px;height:18px;border-radius:50%;background:radial-gradient(circle at 50% 30%,#666,#9a9a9a)"></div>
<div class="a" style="left:1689px;top:1151px;width:18px;height:18px;border-radius:50%;background:radial-gradient(circle at 50% 30%,#666,#9a9a9a)"></div>
<div class="a" style="left:1727.6px;top:1151px;width:18px;height:18px;border-radius:50%;background:radial-gradient(circle at 50% 30%,#666,#9a9a9a)"></div>
<div class="a" style="left:1766px;top:1151px;width:18px;height:18px;border-radius:50%;background:radial-gradient(circle at 50% 30%,#666,#9a9a9a)"></div>
<div class="a" style="left:1805px;top:1151px;width:18px;height:18px;border-radius:50%;background:radial-gradient(circle at 50% 30%,#666,#9a9a9a)"></div>
<div class="a" style="left:1638.5px;top:1173px;width:234px;height:25px;border-radius:4px;background:linear-gradient(#c0c0c0,#a2a2a2 45%,#8a8a8a 100%)"></div>
<div class="a" style="left:1756px;top:1173px;width:1.2px;height:25px;background:#555555;"></div>
<div class="a" style="left:1656.5px;top:1176.5px;width:17px;height:17px;border-radius:50%;background:radial-gradient(circle at 50% 30%,#777,#b0b0b0)"></div>
<div class="a" style="left:1839.5px;top:1176.5px;width:17px;height:17px;border-radius:50%;background:radial-gradient(circle at 50% 30%,#777,#b0b0b0)"></div>
<div class="t" style="left:1660.97px;top:1178.69px;font-size:14.53px;color:#333;">«</div>
<div class="t" style="left:1843.97px;top:1178.69px;font-size:14.53px;color:#333;">»</div>
<div class="t" style="left:1688.60px;top:1175.90px;font-size:18.90px;color:#2e2e2e;transform:scaleX(1.0110);">Back</div>
<div class="t" style="left:1780.30px;top:1175.90px;font-size:18.90px;color:#2e2e2e;transform:scaleX(1.1254);">Next</div>
<svg class="a" style="left:1530px;top:1115px" width="345" height="85" viewBox="1530 1115 345 85">
<polygon points="1544.6,1130.2 1586.3,1137.9 1588.2,1164.2 1619,1170.6 1572.8,1184.8 1547.8,1170.6" fill="rgba(255,255,255,0.04)" stroke="rgba(225,225,225,0.75)" stroke-width="5.6" stroke-linejoin="round"/>
<polygon points="1544.6,1130.2 1586.3,1137.9 1588.2,1164.2 1619,1170.6 1572.8,1184.8 1547.8,1170.6" fill="none" stroke="rgba(140,30,40,0.8)" stroke-width="3.6" stroke-linejoin="round"/>
<line x1="1555" y1="1167" x2="1588" y2="1164" stroke="rgba(200,60,70,0.8)" stroke-width="1.5"/>
<path d="M1555.8,1145 C1559,1141.5 1563.5,1141 1566,1147 L1569.8,1159.5 L1592.5,1129" fill="none" stroke="rgba(235,235,235,0.7)" stroke-width="6.5" stroke-linecap="round" stroke-linejoin="round"/>
<path d="M1555.8,1145 C1559,1141.5 1563.5,1141 1566,1147 L1569.8,1159.5 L1592.5,1129" fill="none" stroke="rgba(30,30,30,0.72)" stroke-width="4" stroke-linecap="round" stroke-linejoin="round"/>
</svg>
<svg class="a" style="left:1580px;top:1125px" width="295" height="50" viewBox="1580 1125 295 50">
<text x="1594" y="1161.5" font-family="Liberation Sans" font-weight="bold" font-size="30.5" textLength="171" lengthAdjust="spacingAndGlyphs" fill="rgba(150,35,50,0.68)" stroke="rgba(225,225,225,0.8)" stroke-width="2.4" paint-order="stroke">NOTEBOOK</text>
<text x="1765" y="1161.5" font-family="Liberation Sans" font-weight="bold" font-size="30.5" textLength="102" lengthAdjust="spacingAndGlyphs" fill="none" stroke="rgba(230,230,230,0.75)" stroke-width="4.2">CHECK</text>
<text x="1765" y="1161.5" font-family="Liberation Sans" font-weight="bold" font-size="30.5" textLength="102" lengthAdjust="spacingAndGlyphs" fill="none" stroke="rgba(25,25,25,0.9)" stroke-width="1.8">CHECK</text>
</svg>
</body></html>
